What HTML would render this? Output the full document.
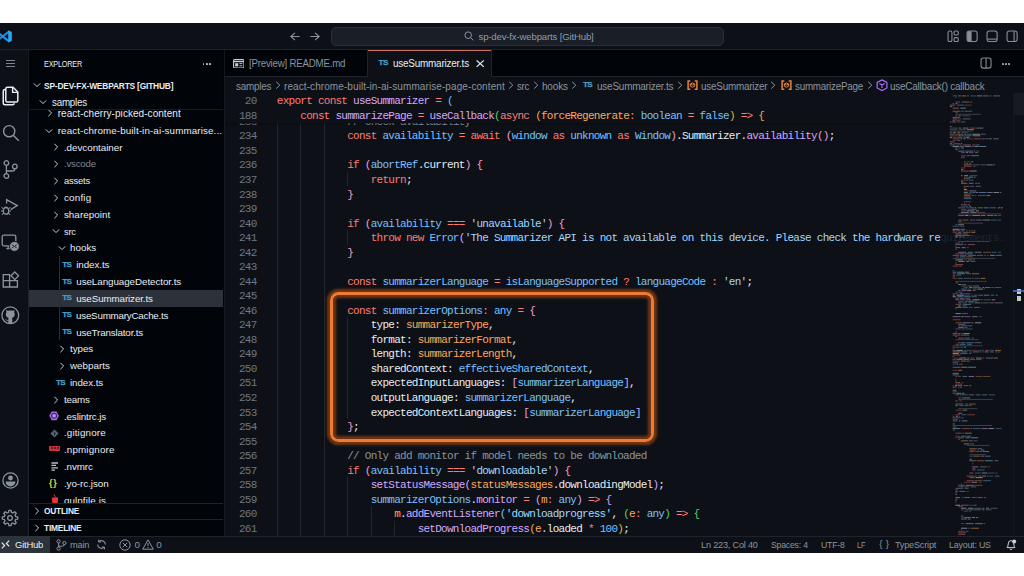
<!DOCTYPE html>
<html><head><meta charset="utf-8"><title>VS Code</title>
<style>
*{box-sizing:border-box;margin:0;padding:0}
html,body{width:1024px;height:576px;overflow:hidden;background:#fff}
body{position:relative;font-family:"Liberation Sans",sans-serif;font-size:10px;color:#e6edf3}
.win{position:absolute;left:0;top:23px;width:1024px;height:530px;background:#0d1117;overflow:hidden}
.page{position:absolute;left:0;top:-23px;width:1024px;height:576px}
.page div,.page svg{position:absolute}
.page span{position:static}
.t{white-space:pre}
.ln{left:224px;width:32.6px;text-align:right;height:14.533px;line-height:14.533px;font-family:"Liberation Mono",monospace;font-size:11.00px;letter-spacing:-0.731px;color:#6e7681;white-space:pre}
.cl{height:14.533px;line-height:14.533px;font-family:"Liberation Mono",monospace;font-size:11.00px;letter-spacing:-0.731px;white-space:pre;color:#e6edf3}
.tsi{font:bold 8.1px "Liberation Sans",sans-serif;color:#4b9fc6;height:14px;line-height:14px;letter-spacing:-0.55px;white-space:pre;-webkit-text-stroke:0.25px #4b9fc6}
</style></head><body>
<div class="win"><div class="page">
<div style="left:224.00px;top:76.00px;width:800.00px;height:460.00px;background:#0d1117;"></div><div style="left:276.80px;top:123.00px;width:1.00px;height:413.00px;background:#21262d;"></div><div style="left:300.27px;top:123.00px;width:1.00px;height:413.00px;background:#21262d;"></div><div style="left:323.75px;top:123.00px;width:1.00px;height:413.00px;background:#21262d;"></div><div style="left:347.22px;top:171.98px;width:1.00px;height:14.53px;background:#21262d;"></div><div style="left:347.22px;top:230.11px;width:1.00px;height:14.53px;background:#21262d;"></div><div style="left:347.22px;top:317.31px;width:1.00px;height:101.73px;background:#21262d;"></div><div style="left:347.22px;top:477.18px;width:1.00px;height:58.82px;background:#21262d;"></div><div style="left:370.70px;top:506.24px;width:1.00px;height:29.76px;background:#21262d;"></div><div style="left:394.17px;top:520.77px;width:1.00px;height:15.23px;background:#21262d;"></div><div class="ln" style="top:114.85px">233</div><div class="cl" style="top:114.85px;left:347.22px"><span style="color:#8b949e">// Check availability</span></div><div class="ln" style="top:129.38px">234</div><div class="cl" style="top:129.38px;left:347.22px"><span style="color:#ff7b72">const </span><span style="color:#79c0ff">availability</span><span style="color:#ff7b72"> = await </span><span style="color:#ff9bce">(</span><span style="color:#79c0ff">window</span><span style="color:#ff7b72"> as </span><span style="color:#79c0ff">unknown</span><span style="color:#ff7b72"> as </span><span style="color:#79c0ff">Window</span><span style="color:#ff9bce">)</span><span style="color:#e6edf3">.Summarizer.</span><span style="color:#d2a8ff">availability</span><span style="color:#ff9bce">()</span><span style="color:#e6edf3">;</span></div><div class="ln" style="top:143.92px">235</div><div class="ln" style="top:158.45px">236</div><div class="cl" style="top:158.45px;left:347.22px"><span style="color:#ff7b72">if </span><span style="color:#ff9bce">(</span><span style="color:#79c0ff">abortRef</span><span style="color:#e6edf3">.current</span><span style="color:#ff9bce">)</span><span style="color:#e6edf3"> </span><span style="color:#ff9bce">{</span></div><div class="ln" style="top:172.98px">237</div><div class="cl" style="top:172.98px;left:370.70px"><span style="color:#ff7b72">return</span><span style="color:#e6edf3">;</span></div><div class="ln" style="top:187.52px">238</div><div class="cl" style="top:187.52px;left:347.22px"><span style="color:#ff9bce">}</span></div><div class="ln" style="top:202.05px">239</div><div class="ln" style="top:216.58px">240</div><div class="cl" style="top:216.58px;left:347.22px"><span style="color:#ff7b72">if </span><span style="color:#ff9bce">(</span><span style="color:#79c0ff">availability</span><span style="color:#ff7b72"> === </span><span style="color:#a5d6ff">&#x27;unavailable&#x27;</span><span style="color:#ff9bce">)</span><span style="color:#e6edf3"> </span><span style="color:#ff9bce">{</span></div><div class="ln" style="top:231.11px">241</div><div class="cl" style="top:231.11px;left:370.70px"><span style="color:#ff7b72">throw new </span><span style="color:#79c0ff">Error</span><span style="color:#d2a8ff">(</span><span style="color:#a5d6ff">&#x27;The Summarizer API is not available on this device. Please check the hardware re</span><span style="color:rgba(165,214,255,.11)">quirements.</span></div><div class="ln" style="top:245.65px">242</div><div class="cl" style="top:245.65px;left:347.22px"><span style="color:#ff9bce">}</span></div><div class="ln" style="top:260.18px">243</div><div class="ln" style="top:274.71px">244</div><div class="cl" style="top:274.71px;left:347.22px"><span style="color:#ff7b72">const </span><span style="color:#79c0ff">summarizerLanguage</span><span style="color:#ff7b72"> = </span><span style="color:#79c0ff">isLanguageSupported</span><span style="color:#ff7b72"> ? </span><span style="color:#79c0ff">languageCode</span><span style="color:#ff7b72"> : </span><span style="color:#a5d6ff">&#x27;en&#x27;</span><span style="color:#e6edf3">;</span></div><div class="ln" style="top:289.25px">245</div><div class="ln" style="top:303.78px">246</div><div class="cl" style="top:303.78px;left:347.22px"><span style="color:#ff7b72">const </span><span style="color:#79c0ff">summarizerOptions</span><span style="color:#ff7b72">: </span><span style="color:#79c0ff">any</span><span style="color:#ff7b72"> = </span><span style="color:#ff9bce">{</span></div><div class="ln" style="top:318.31px">247</div><div class="cl" style="top:318.31px;left:370.70px"><span style="color:#e6edf3">type</span><span style="color:#e6edf3">: </span><span style="color:#ffa657">summarizerType</span><span style="color:#e6edf3">,</span></div><div class="ln" style="top:332.85px">248</div><div class="cl" style="top:332.85px;left:370.70px"><span style="color:#e6edf3">format</span><span style="color:#e6edf3">: </span><span style="color:#ffa657">summarizerFormat</span><span style="color:#e6edf3">,</span></div><div class="ln" style="top:347.38px">249</div><div class="cl" style="top:347.38px;left:370.70px"><span style="color:#e6edf3">length</span><span style="color:#e6edf3">: </span><span style="color:#ffa657">summarizerLength</span><span style="color:#e6edf3">,</span></div><div class="ln" style="top:361.91px">250</div><div class="cl" style="top:361.91px;left:370.70px"><span style="color:#e6edf3">sharedContext</span><span style="color:#e6edf3">: </span><span style="color:#79c0ff">effectiveSharedContext</span><span style="color:#e6edf3">,</span></div><div class="ln" style="top:376.44px">251</div><div class="cl" style="top:376.44px;left:370.70px"><span style="color:#e6edf3">expectedInputLanguages</span><span style="color:#e6edf3">: </span><span style="color:#d2a8ff">[</span><span style="color:#79c0ff">summarizerLanguage</span><span style="color:#d2a8ff">]</span><span style="color:#e6edf3">,</span></div><div class="ln" style="top:390.98px">252</div><div class="cl" style="top:390.98px;left:370.70px"><span style="color:#e6edf3">outputLanguage</span><span style="color:#e6edf3">: </span><span style="color:#79c0ff">summarizerLanguage</span><span style="color:#e6edf3">,</span></div><div class="ln" style="top:405.51px">253</div><div class="cl" style="top:405.51px;left:370.70px"><span style="color:#e6edf3">expectedContextLanguages</span><span style="color:#e6edf3">: </span><span style="color:#d2a8ff">[</span><span style="color:#79c0ff">summarizerLanguage</span><span style="color:#d2a8ff">]</span></div><div class="ln" style="top:420.04px">254</div><div class="cl" style="top:420.04px;left:347.22px"><span style="color:#ff9bce">}</span><span style="color:#e6edf3">;</span></div><div class="ln" style="top:434.58px">255</div><div class="ln" style="top:449.11px">256</div><div class="cl" style="top:449.11px;left:347.22px"><span style="color:#8b949e">// Only add monitor if model needs to be downloaded</span></div><div class="ln" style="top:463.64px">257</div><div class="cl" style="top:463.64px;left:347.22px"><span style="color:#ff7b72">if </span><span style="color:#ff9bce">(</span><span style="color:#79c0ff">availability</span><span style="color:#ff7b72"> === </span><span style="color:#a5d6ff">&#x27;downloadable&#x27;</span><span style="color:#ff9bce">)</span><span style="color:#e6edf3"> </span><span style="color:#ff9bce">{</span></div><div class="ln" style="top:478.18px">258</div><div class="cl" style="top:478.18px;left:370.70px"><span style="color:#d2a8ff">setStatusMessage</span><span style="color:#d2a8ff">(</span><span style="color:#ffa657">statusMessages</span><span style="color:#e6edf3">.downloadingModel</span><span style="color:#d2a8ff">)</span><span style="color:#e6edf3">;</span></div><div class="ln" style="top:492.71px">259</div><div class="cl" style="top:492.71px;left:370.70px"><span style="color:#79c0ff">summarizerOptions</span><span style="color:#e6edf3">.</span><span style="color:#d2a8ff">monitor</span><span style="color:#ff7b72"> = </span><span style="color:#d2a8ff">(</span><span style="color:#ffa657">m</span><span style="color:#ff7b72">: </span><span style="color:#79c0ff">any</span><span style="color:#d2a8ff">)</span><span style="color:#ff7b72"> =&gt; </span><span style="color:#d2a8ff">{</span></div><div class="ln" style="top:507.24px">260</div><div class="cl" style="top:507.24px;left:394.17px"><span style="color:#ffa657">m</span><span style="color:#e6edf3">.</span><span style="color:#d2a8ff">addEventListener</span><span style="color:#79c0ff">(</span><span style="color:#a5d6ff">&#x27;downloadprogress&#x27;</span><span style="color:#e6edf3">, </span><span style="color:#56d364">(</span><span style="color:#ffa657">e</span><span style="color:#ff7b72">: </span><span style="color:#79c0ff">any</span><span style="color:#56d364">)</span><span style="color:#ff7b72"> =&gt; </span><span style="color:#56d364">{</span></div><div class="ln" style="top:521.77px">261</div><div class="cl" style="top:521.77px;left:417.64px"><span style="color:#d2a8ff">setDownloadProgress</span><span style="color:#e3b341">(</span><span style="color:#ffa657">e</span><span style="color:#e6edf3">.loaded </span><span style="color:#ff7b72">* </span><span style="color:#79c0ff">100</span><span style="color:#e3b341">)</span><span style="color:#e6edf3">;</span></div><div style="left:224.50px;top:93.00px;width:722.00px;height:30.00px;background:#0d1117;box-shadow:0 1px 1.5px rgba(0,0,0,.4)"></div><div class="ln" style="top:94.23px">20</div><div class="cl" style="top:94.23px;left:276.80px"><span style="color:#ff7b72">export const </span><span style="color:#d2a8ff">useSummarizer</span><span style="color:#ff7b72"> = </span><span style="color:#79c0ff">(</span></div><div class="ln" style="top:109.43px">188</div><div class="cl" style="top:109.43px;left:300.27px"><span style="color:#ff7b72">const </span><span style="color:#d2a8ff">summarizePage</span><span style="color:#ff7b72"> = </span><span style="color:#d2a8ff">useCallback</span><span style="color:#56d364">(</span><span style="color:#ff7b72">async </span><span style="color:#e3b341">(</span><span style="color:#ffa657">forceRegenerate</span><span style="color:#ff7b72">: </span><span style="color:#79c0ff">boolean</span><span style="color:#ff7b72"> = </span><span style="color:#79c0ff">false</span><span style="color:#e3b341">)</span><span style="color:#ff7b72"> =&gt; </span><span style="color:#e3b341">{</span></div><div style="left:225.00px;top:77.00px;width:799.00px;height:16.00px;background:#0d1117;"></div><div class="t" style="left:236.30px;top:78.80px;height:16px;line-height:16px;font-size:10.00px;color:#8b949e;letter-spacing:-0.220px;transform:scaleX(0.9884);transform-origin:0 50%;">samples</div><svg style="left:274.60px;top:81.30px;" width="6" height="8.4" viewBox="0 0 6 8.4"><path d="M1.2 0.8 L4.8 4.2 L1.2 7.6" fill="none" stroke="#8b949e" stroke-width="1"/></svg><div class="t" style="left:284.00px;top:78.80px;height:16px;line-height:16px;font-size:10.00px;color:#8b949e;letter-spacing:0.086px;">react-chrome-built-in-ai-summarise-page-content</div><svg style="left:508.10px;top:81.30px;" width="6" height="8.4" viewBox="0 0 6 8.4"><path d="M1.2 0.8 L4.8 4.2 L1.2 7.6" fill="none" stroke="#8b949e" stroke-width="1"/></svg><div class="t" style="left:517.00px;top:78.80px;height:16px;line-height:16px;font-size:10.00px;color:#8b949e;letter-spacing:-0.220px;transform:scaleX(0.9542);transform-origin:0 50%;">src</div><svg style="left:533.00px;top:81.30px;" width="6" height="8.4" viewBox="0 0 6 8.4"><path d="M1.2 0.8 L4.8 4.2 L1.2 7.6" fill="none" stroke="#8b949e" stroke-width="1"/></svg><div class="t" style="left:541.90px;top:78.80px;height:16px;line-height:16px;font-size:10.00px;color:#8b949e;letter-spacing:-0.146px;">hooks</div><svg style="left:571.10px;top:81.30px;" width="6" height="8.4" viewBox="0 0 6 8.4"><path d="M1.2 0.8 L4.8 4.2 L1.2 7.6" fill="none" stroke="#8b949e" stroke-width="1"/></svg><div class="tsi" style="left:582.90px;top:78.39px">TS</div><div class="t" style="left:597.30px;top:78.80px;height:16px;line-height:16px;font-size:10.00px;color:#8b949e;letter-spacing:-0.220px;transform:scaleX(0.9958);transform-origin:0 50%;">useSummarizer.ts</div><svg style="left:677.20px;top:81.30px;" width="6" height="8.4" viewBox="0 0 6 8.4"><path d="M1.2 0.8 L4.8 4.2 L1.2 7.6" fill="none" stroke="#8b949e" stroke-width="1"/></svg><svg style="left:687.20px;top:79.80px;" width="11" height="10.2" viewBox="0 0 11 10.2"><path d="M3.3 0.9 H1.1 V9.3 H3.3 M7.7 0.9 H9.9 V9.3 H7.7" fill="none" stroke="#e8833a" stroke-width="1.5"/><path d="M3.3 4 L5.5 3 L7.7 4 V6.2 L5.5 7.2 L3.3 6.2 Z M3.3 4.1 L5.5 5.1 L7.7 4.1" fill="none" stroke="#e8833a" stroke-width="1"/></svg><div class="t" style="left:700.70px;top:78.80px;height:16px;line-height:16px;font-size:10.00px;color:#8b949e;letter-spacing:-0.220px;transform:scaleX(0.9869);transform-origin:0 50%;">useSummarizer</div><svg style="left:770.40px;top:81.30px;" width="6" height="8.4" viewBox="0 0 6 8.4"><path d="M1.2 0.8 L4.8 4.2 L1.2 7.6" fill="none" stroke="#8b949e" stroke-width="1"/></svg><svg style="left:780.90px;top:79.80px;" width="11" height="10.2" viewBox="0 0 11 10.2"><path d="M3.3 0.9 H1.1 V9.3 H3.3 M7.7 0.9 H9.9 V9.3 H7.7" fill="none" stroke="#e8833a" stroke-width="1.5"/><path d="M3.3 4 L5.5 3 L7.7 4 V6.2 L5.5 7.2 L3.3 6.2 Z M3.3 4.1 L5.5 5.1 L7.7 4.1" fill="none" stroke="#e8833a" stroke-width="1"/></svg><div class="t" style="left:794.80px;top:78.80px;height:16px;line-height:16px;font-size:10.00px;color:#8b949e;letter-spacing:-0.220px;transform:scaleX(0.9797);transform-origin:0 50%;">summarizePage</div><svg style="left:866.60px;top:81.30px;" width="6" height="8.4" viewBox="0 0 6 8.4"><path d="M1.2 0.8 L4.8 4.2 L1.2 7.6" fill="none" stroke="#8b949e" stroke-width="1"/></svg><svg style="left:875.70px;top:79.20px;" width="12" height="12.4" viewBox="0 0 12 12.4"><path d="M6 0.9 L10.9 3.4 V9 L6 11.5 L1.1 9 V3.4 Z" fill="none" stroke="#a371f7" stroke-width="1.2"/><path d="M3.4 4.5 L6 6 L8.6 4.5 M6 6 V9" fill="none" stroke="#a371f7" stroke-width="1.2"/></svg><div class="t" style="left:890.40px;top:78.80px;height:16px;line-height:16px;font-size:10.00px;color:#8b949e;letter-spacing:-0.220px;transform:scaleX(0.9914);transform-origin:0 50%;">useCallback() callback</div><div style="left:329.8px;top:292px;width:324.2px;height:149.7px;border:3.4px solid #f07a33;border-radius:8.5px;box-shadow:0 0 2.5px 3px rgba(175,78,18,.62), inset 0 0 2.5px 3px rgba(175,78,18,.62)"></div><svg style="left:0;top:0" width="1024" height="576"><rect x="952.62" y="95.40" width="4.68" height="1" fill="#79c0ff" opacity="0.39"/><rect x="958.08" y="95.40" width="3.12" height="1" fill="#e6edf3" opacity="0.37"/><rect x="961.98" y="95.40" width="3.90" height="1" fill="#ffa657" opacity="0.53"/><rect x="966.66" y="95.40" width="2.34" height="1" fill="#ffa657" opacity="0.41"/><rect x="970.56" y="95.40" width="5.46" height="1" fill="#79c0ff" opacity="0.35"/><rect x="976.80" y="95.40" width="5.46" height="1" fill="#e6edf3" opacity="0.46"/><rect x="983.04" y="95.40" width="5.46" height="1" fill="#d2a8ff" opacity="0.47"/><rect x="989.28" y="95.40" width="2.34" height="1" fill="#ffa657" opacity="0.34"/><rect x="993.18" y="95.40" width="7.02" height="1" fill="#e6edf3" opacity="0.35"/><rect x="955.42" y="96.93" width="0.90" height="1" fill="#ff9bce" opacity="0.4"/><rect x="955.42" y="101.53" width="4.68" height="1" fill="#d2a8ff" opacity="0.38"/><rect x="961.66" y="101.53" width="7.80" height="1" fill="#e6edf3" opacity="0.36"/><rect x="970.24" y="101.53" width="2.34" height="1" fill="#ffa657" opacity="0.36"/><rect x="952.62" y="103.07" width="1.56" height="1" fill="#ff7b72" opacity="0.46"/><rect x="955.74" y="103.07" width="1.56" height="1" fill="#e6edf3" opacity="0.50"/><rect x="949.81" y="104.60" width="5.46" height="1" fill="#ff7b72" opacity="0.54"/><rect x="956.83" y="104.60" width="7.02" height="1" fill="#e6edf3" opacity="0.31"/><rect x="964.63" y="104.60" width="7.02" height="1" fill="#ff7b72" opacity="0.35"/><rect x="949.81" y="106.13" width="2.40" height="1" fill="#e6edf3" opacity="0.4"/><rect x="952.62" y="107.66" width="6.24" height="1" fill="#ff7b72" opacity="0.53"/><rect x="960.42" y="107.66" width="5.46" height="1" fill="#a5d6ff" opacity="0.50"/><rect x="952.62" y="110.73" width="7.80" height="1" fill="#d2a8ff" opacity="0.44"/><rect x="961.20" y="110.73" width="2.34" height="1" fill="#79c0ff" opacity="0.46"/><rect x="964.32" y="110.73" width="7.80" height="1" fill="#a5d6ff" opacity="0.36"/><rect x="955.42" y="112.26" width="2.40" height="1" fill="#e3b341" opacity="0.4"/><rect x="955.42" y="113.80" width="25.32" height="1" fill="#8b949e" opacity="0.35"/><rect x="955.42" y="115.33" width="1.56" height="1" fill="#ff7b72" opacity="0.46"/><rect x="958.54" y="115.33" width="2.34" height="1" fill="#a5d6ff" opacity="0.47"/><rect x="962.44" y="115.33" width="7.80" height="1" fill="#ff7b72" opacity="0.34"/><rect x="952.62" y="116.86" width="7.02" height="1" fill="#79c0ff" opacity="0.49"/><rect x="952.62" y="118.40" width="4.68" height="1" fill="#ff7b72" opacity="0.54"/><rect x="958.08" y="118.40" width="3.12" height="1" fill="#a5d6ff" opacity="0.31"/><rect x="962.76" y="118.40" width="7.80" height="1" fill="#d2a8ff" opacity="0.43"/><rect x="952.62" y="119.93" width="2.34" height="1" fill="#d2a8ff" opacity="0.42"/><rect x="955.74" y="119.93" width="4.68" height="1" fill="#ffa657" opacity="0.30"/><rect x="949.81" y="121.46" width="1.56" height="1" fill="#79c0ff" opacity="0.50"/><rect x="952.15" y="121.46" width="3.90" height="1" fill="#a5d6ff" opacity="0.44"/><rect x="956.83" y="121.46" width="3.12" height="1" fill="#ff7b72" opacity="0.40"/><rect x="960.73" y="121.46" width="4.68" height="1" fill="#79c0ff" opacity="0.46"/><rect x="949.81" y="126.06" width="2.40" height="1" fill="#ff9bce" opacity="0.4"/><rect x="949.81" y="127.59" width="1.56" height="1" fill="#ffa657" opacity="0.31"/><rect x="952.15" y="127.59" width="5.46" height="1" fill="#79c0ff" opacity="0.33"/><rect x="958.39" y="127.59" width="3.12" height="1" fill="#e6edf3" opacity="0.35"/><rect x="963.07" y="127.59" width="5.46" height="1" fill="#e6edf3" opacity="0.43"/><rect x="970.09" y="127.59" width="5.46" height="1" fill="#ff7b72" opacity="0.46"/><rect x="976.33" y="127.59" width="7.02" height="1" fill="#e6edf3" opacity="0.39"/><rect x="949.81" y="129.13" width="7.80" height="1" fill="#ff7b72" opacity="0.35"/><rect x="959.17" y="129.13" width="6.24" height="1" fill="#79c0ff" opacity="0.31"/><rect x="966.97" y="129.13" width="7.02" height="1" fill="#e6edf3" opacity="0.45"/><rect x="949.81" y="130.66" width="22.89" height="1" fill="#8b949e" opacity="0.35"/><rect x="949.81" y="132.19" width="1.56" height="1" fill="#d2a8ff" opacity="0.52"/><rect x="952.93" y="132.19" width="3.12" height="1" fill="#ffa657" opacity="0.55"/><rect x="957.61" y="132.19" width="2.34" height="1" fill="#ffa657" opacity="0.51"/><rect x="961.51" y="132.19" width="6.24" height="1" fill="#d2a8ff" opacity="0.31"/><rect x="949.81" y="133.72" width="4.68" height="1" fill="#e6edf3" opacity="0.34"/><rect x="955.27" y="133.72" width="7.80" height="1" fill="#ffa657" opacity="0.44"/><rect x="963.85" y="133.72" width="2.34" height="1" fill="#a5d6ff" opacity="0.42"/><rect x="966.97" y="133.72" width="4.68" height="1" fill="#79c0ff" opacity="0.46"/><rect x="972.43" y="133.72" width="7.80" height="1" fill="#e6edf3" opacity="0.51"/><rect x="981.01" y="133.72" width="4.68" height="1" fill="#d2a8ff" opacity="0.41"/><rect x="949.81" y="135.26" width="7.80" height="1" fill="#ff7b72" opacity="0.32"/><rect x="958.39" y="135.26" width="2.34" height="1" fill="#d2a8ff" opacity="0.54"/><rect x="961.51" y="135.26" width="2.34" height="1" fill="#79c0ff" opacity="0.54"/><rect x="964.63" y="135.26" width="7.02" height="1" fill="#79c0ff" opacity="0.43"/><rect x="972.43" y="135.26" width="7.80" height="1" fill="#a5d6ff" opacity="0.55"/><rect x="949.81" y="136.79" width="2.34" height="1" fill="#e6edf3" opacity="0.51"/><rect x="952.93" y="136.79" width="3.90" height="1" fill="#ffa657" opacity="0.32"/><rect x="957.61" y="136.79" width="4.68" height="1" fill="#79c0ff" opacity="0.45"/><rect x="963.85" y="136.79" width="1.56" height="1" fill="#a5d6ff" opacity="0.50"/><rect x="966.19" y="136.79" width="3.12" height="1" fill="#e6edf3" opacity="0.50"/><rect x="952.62" y="138.32" width="7.02" height="1" fill="#ff7b72" opacity="0.41"/><rect x="960.42" y="138.32" width="1.56" height="1" fill="#e6edf3" opacity="0.35"/><rect x="962.76" y="138.32" width="3.12" height="1" fill="#e6edf3" opacity="0.33"/><rect x="966.66" y="138.32" width="6.24" height="1" fill="#ff7b72" opacity="0.35"/><rect x="973.68" y="138.32" width="7.80" height="1" fill="#ff7b72" opacity="0.46"/><rect x="982.26" y="138.32" width="2.34" height="1" fill="#d2a8ff" opacity="0.46"/><rect x="985.38" y="138.32" width="3.12" height="1" fill="#79c0ff" opacity="0.43"/><rect x="989.28" y="138.32" width="2.34" height="1" fill="#e6edf3" opacity="0.47"/><rect x="993.18" y="138.32" width="5.46" height="1" fill="#79c0ff" opacity="0.48"/><rect x="952.62" y="139.86" width="3.90" height="1" fill="#ff7b72" opacity="0.31"/><rect x="957.30" y="139.86" width="3.12" height="1" fill="#e6edf3" opacity="0.32"/><rect x="949.81" y="141.39" width="4.68" height="1" fill="#ff7b72" opacity="0.48"/><rect x="949.81" y="142.92" width="2.34" height="1" fill="#79c0ff" opacity="0.43"/><rect x="953.71" y="142.92" width="6.24" height="1" fill="#79c0ff" opacity="0.34"/><rect x="960.73" y="142.92" width="1.56" height="1" fill="#79c0ff" opacity="0.51"/><rect x="949.81" y="144.46" width="5.46" height="1" fill="#79c0ff" opacity="0.46"/><rect x="956.05" y="144.46" width="6.24" height="1" fill="#d2a8ff" opacity="0.33"/><rect x="963.07" y="144.46" width="7.80" height="1" fill="#ff7b72" opacity="0.54"/><rect x="972.43" y="144.46" width="3.12" height="1" fill="#d2a8ff" opacity="0.40"/><rect x="976.33" y="144.46" width="3.12" height="1" fill="#79c0ff" opacity="0.52"/><rect x="952.62" y="145.99" width="6.24" height="1" fill="#e6edf3" opacity="0.49"/><rect x="959.64" y="145.99" width="4.68" height="1" fill="#e6edf3" opacity="0.33"/><rect x="965.10" y="145.99" width="5.46" height="1" fill="#a5d6ff" opacity="0.52"/><rect x="971.34" y="145.99" width="2.34" height="1" fill="#ff7b72" opacity="0.47"/><rect x="974.46" y="145.99" width="3.90" height="1" fill="#e6edf3" opacity="0.47"/><rect x="979.14" y="145.99" width="7.02" height="1" fill="#a5d6ff" opacity="0.49"/><rect x="955.42" y="147.52" width="1.56" height="1" fill="#e6edf3" opacity="0.39"/><rect x="957.76" y="147.52" width="2.34" height="1" fill="#79c0ff" opacity="0.32"/><rect x="960.88" y="147.52" width="3.12" height="1" fill="#79c0ff" opacity="0.52"/><rect x="955.42" y="149.05" width="2.40" height="1" fill="#e3b341" opacity="0.4"/><rect x="958.23" y="150.59" width="6.24" height="1" fill="#d2a8ff" opacity="0.49"/><rect x="965.25" y="150.59" width="7.80" height="1" fill="#79c0ff" opacity="0.49"/><rect x="973.83" y="150.59" width="1.56" height="1" fill="#ffa657" opacity="0.44"/><rect x="976.17" y="150.59" width="3.12" height="1" fill="#ffa657" opacity="0.30"/><rect x="961.04" y="152.12" width="3.90" height="1" fill="#e6edf3" opacity="0.31"/><rect x="965.72" y="152.12" width="2.34" height="1" fill="#d2a8ff" opacity="0.55"/><rect x="968.84" y="152.12" width="4.68" height="1" fill="#d2a8ff" opacity="0.42"/><rect x="975.08" y="152.12" width="3.12" height="1" fill="#a5d6ff" opacity="0.41"/><rect x="961.04" y="155.19" width="4.68" height="1" fill="#ff7b72" opacity="0.37"/><rect x="966.50" y="155.19" width="3.90" height="1" fill="#e6edf3" opacity="0.30"/><rect x="971.18" y="155.19" width="7.80" height="1" fill="#e6edf3" opacity="0.40"/><rect x="961.04" y="156.72" width="3.90" height="1" fill="#ff7b72" opacity="0.48"/><rect x="963.85" y="161.32" width="2.34" height="1" fill="#ffa657" opacity="0.36"/><rect x="966.97" y="161.32" width="3.12" height="1" fill="#79c0ff" opacity="0.32"/><rect x="970.87" y="161.32" width="2.34" height="1" fill="#79c0ff" opacity="0.55"/><rect x="963.85" y="162.85" width="1.56" height="1" fill="#ffa657" opacity="0.31"/><rect x="966.19" y="162.85" width="1.56" height="1" fill="#a5d6ff" opacity="0.43"/><rect x="969.31" y="162.85" width="1.56" height="1" fill="#a5d6ff" opacity="0.36"/><rect x="963.85" y="164.38" width="7.80" height="1" fill="#ffa657" opacity="0.53"/><rect x="972.43" y="164.38" width="7.02" height="1" fill="#a5d6ff" opacity="0.32"/><rect x="980.23" y="164.38" width="5.46" height="1" fill="#d2a8ff" opacity="0.37"/><rect x="986.47" y="164.38" width="6.24" height="1" fill="#e6edf3" opacity="0.46"/><rect x="993.49" y="164.38" width="1.56" height="1" fill="#79c0ff" opacity="0.52"/><rect x="963.85" y="165.92" width="7.80" height="1" fill="#ff7b72" opacity="0.36"/><rect x="973.21" y="165.92" width="2.34" height="1" fill="#ff7b72" opacity="0.32"/><rect x="961.04" y="167.45" width="3.90" height="1" fill="#ff7b72" opacity="0.39"/><rect x="961.04" y="168.98" width="2.40" height="1" fill="#e6edf3" opacity="0.4"/><rect x="961.04" y="170.52" width="7.80" height="1" fill="#ff7b72" opacity="0.50"/><rect x="969.62" y="170.52" width="7.02" height="1" fill="#e6edf3" opacity="0.50"/><rect x="961.04" y="175.12" width="1.56" height="1" fill="#d2a8ff" opacity="0.52"/><rect x="964.16" y="175.12" width="3.90" height="1" fill="#e6edf3" opacity="0.50"/><rect x="969.62" y="175.12" width="7.80" height="1" fill="#ffa657" opacity="0.32"/><rect x="963.85" y="176.65" width="3.90" height="1" fill="#ffa657" opacity="0.38"/><rect x="968.53" y="176.65" width="4.68" height="1" fill="#a5d6ff" opacity="0.52"/><rect x="973.99" y="176.65" width="1.56" height="1" fill="#a5d6ff" opacity="0.44"/><rect x="963.85" y="178.18" width="1.56" height="1" fill="#ffa657" opacity="0.54"/><rect x="966.19" y="178.18" width="3.90" height="1" fill="#79c0ff" opacity="0.44"/><rect x="961.04" y="179.71" width="2.34" height="1" fill="#ff7b72" opacity="0.39"/><rect x="964.16" y="179.71" width="3.90" height="1" fill="#ffa657" opacity="0.34"/><rect x="968.84" y="179.71" width="4.68" height="1" fill="#79c0ff" opacity="0.38"/><rect x="961.04" y="181.25" width="2.40" height="1" fill="#e6edf3" opacity="0.4"/><rect x="961.04" y="182.78" width="6.24" height="1" fill="#d2a8ff" opacity="0.50"/><rect x="968.84" y="182.78" width="4.68" height="1" fill="#e6edf3" opacity="0.40"/><rect x="975.08" y="182.78" width="2.34" height="1" fill="#79c0ff" opacity="0.45"/><rect x="978.20" y="182.78" width="1.56" height="1" fill="#d2a8ff" opacity="0.52"/><rect x="963.85" y="185.85" width="5.46" height="1" fill="#ffa657" opacity="0.40"/><rect x="970.09" y="185.85" width="3.90" height="1" fill="#a5d6ff" opacity="0.34"/><rect x="975.55" y="185.85" width="5.46" height="1" fill="#a5d6ff" opacity="0.36"/><rect x="963.85" y="187.38" width="1.60" height="1" fill="#ff9bce" opacity="0.4"/><rect x="963.85" y="188.91" width="3.12" height="1" fill="#e6edf3" opacity="0.55"/><rect x="963.85" y="190.45" width="4.68" height="1" fill="#ff7b72" opacity="0.33"/><rect x="969.31" y="190.45" width="7.02" height="1" fill="#d2a8ff" opacity="0.51"/><rect x="963.85" y="191.98" width="3.90" height="1" fill="#e6edf3" opacity="0.42"/><rect x="969.31" y="191.98" width="2.34" height="1" fill="#79c0ff" opacity="0.36"/><rect x="972.43" y="191.98" width="2.34" height="1" fill="#a5d6ff" opacity="0.44"/><rect x="975.55" y="191.98" width="2.34" height="1" fill="#d2a8ff" opacity="0.54"/><rect x="978.67" y="191.98" width="7.80" height="1" fill="#79c0ff" opacity="0.53"/><rect x="987.25" y="191.98" width="5.46" height="1" fill="#e6edf3" opacity="0.42"/><rect x="993.49" y="191.98" width="5.46" height="1" fill="#e6edf3" opacity="0.50"/><rect x="999.73" y="191.98" width="1.56" height="1" fill="#e6edf3" opacity="0.38"/><rect x="963.85" y="193.51" width="7.80" height="1" fill="#ffa657" opacity="0.43"/><rect x="963.85" y="195.04" width="6.24" height="1" fill="#ffa657" opacity="0.41"/><rect x="971.65" y="195.04" width="2.34" height="1" fill="#a5d6ff" opacity="0.36"/><rect x="974.77" y="195.04" width="1.56" height="1" fill="#ff7b72" opacity="0.39"/><rect x="977.89" y="195.04" width="7.80" height="1" fill="#ffa657" opacity="0.35"/><rect x="986.47" y="195.04" width="3.90" height="1" fill="#e6edf3" opacity="0.41"/><rect x="963.85" y="196.58" width="7.02" height="1" fill="#ff7b72" opacity="0.52"/><rect x="963.85" y="198.11" width="7.80" height="1" fill="#79c0ff" opacity="0.41"/><rect x="963.85" y="201.18" width="7.02" height="1" fill="#ff7b72" opacity="0.35"/><rect x="963.85" y="202.71" width="0.90" height="1" fill="#e3b341" opacity="0.4"/><rect x="961.04" y="204.24" width="1.56" height="1" fill="#e6edf3" opacity="0.42"/><rect x="963.38" y="204.24" width="3.90" height="1" fill="#ff7b72" opacity="0.50"/><rect x="968.06" y="204.24" width="1.56" height="1" fill="#79c0ff" opacity="0.54"/><rect x="961.04" y="205.78" width="7.02" height="1" fill="#79c0ff" opacity="0.31"/><rect x="968.84" y="205.78" width="2.34" height="1" fill="#e6edf3" opacity="0.38"/><rect x="958.23" y="207.31" width="3.12" height="1" fill="#79c0ff" opacity="0.45"/><rect x="962.13" y="207.31" width="3.12" height="1" fill="#a5d6ff" opacity="0.36"/><rect x="966.03" y="207.31" width="3.12" height="1" fill="#a5d6ff" opacity="0.32"/><rect x="969.93" y="207.31" width="3.90" height="1" fill="#a5d6ff" opacity="0.43"/><rect x="974.61" y="207.31" width="1.56" height="1" fill="#a5d6ff" opacity="0.54"/><rect x="977.73" y="207.31" width="5.46" height="1" fill="#e6edf3" opacity="0.37"/><rect x="983.97" y="207.31" width="4.68" height="1" fill="#79c0ff" opacity="0.52"/><rect x="989.43" y="207.31" width="7.02" height="1" fill="#e6edf3" opacity="0.31"/><rect x="998.01" y="207.31" width="2.34" height="1" fill="#e6edf3" opacity="0.47"/><rect x="1001.13" y="207.31" width="1.56" height="1" fill="#e6edf3" opacity="0.53"/><rect x="961.04" y="208.84" width="5.46" height="1" fill="#ff7b72" opacity="0.39"/><rect x="968.06" y="208.84" width="2.34" height="1" fill="#79c0ff" opacity="0.37"/><rect x="971.18" y="208.84" width="5.46" height="1" fill="#d2a8ff" opacity="0.39"/><rect x="961.04" y="210.37" width="4.68" height="1" fill="#ff7b72" opacity="0.37"/><rect x="966.50" y="210.37" width="7.80" height="1" fill="#e6edf3" opacity="0.47"/><rect x="975.86" y="210.37" width="3.12" height="1" fill="#e6edf3" opacity="0.50"/><rect x="961.04" y="211.91" width="7.80" height="1" fill="#d2a8ff" opacity="0.55"/><rect x="970.40" y="211.91" width="6.24" height="1" fill="#e6edf3" opacity="0.43"/><rect x="977.42" y="211.91" width="7.80" height="1" fill="#ff7b72" opacity="0.35"/><rect x="958.23" y="213.44" width="42.95" height="1" fill="#8b949e" opacity="0.35"/><rect x="958.23" y="214.97" width="6.24" height="1" fill="#e6edf3" opacity="0.34"/><rect x="965.25" y="214.97" width="3.12" height="1" fill="#e6edf3" opacity="0.52"/><rect x="969.15" y="214.97" width="2.34" height="1" fill="#ffa657" opacity="0.30"/><rect x="972.27" y="214.97" width="7.80" height="1" fill="#e6edf3" opacity="0.45"/><rect x="980.85" y="214.97" width="4.68" height="1" fill="#79c0ff" opacity="0.54"/><rect x="987.09" y="214.97" width="6.24" height="1" fill="#79c0ff" opacity="0.54"/><rect x="994.11" y="214.97" width="3.12" height="1" fill="#79c0ff" opacity="0.46"/><rect x="998.01" y="214.97" width="3.12" height="1" fill="#ff7b72" opacity="0.38"/><rect x="958.23" y="219.57" width="3.90" height="1" fill="#ff7b72" opacity="0.50"/><rect x="962.91" y="219.57" width="5.46" height="1" fill="#ffa657" opacity="0.48"/><rect x="969.93" y="219.57" width="5.46" height="1" fill="#d2a8ff" opacity="0.38"/><rect x="976.17" y="219.57" width="5.46" height="1" fill="#d2a8ff" opacity="0.48"/><rect x="982.41" y="219.57" width="7.80" height="1" fill="#e6edf3" opacity="0.43"/><rect x="990.99" y="219.57" width="5.46" height="1" fill="#79c0ff" opacity="0.41"/><rect x="997.23" y="219.57" width="3.90" height="1" fill="#79c0ff" opacity="0.34"/><rect x="958.23" y="221.11" width="3.12" height="1" fill="#ff7b72" opacity="0.38"/><rect x="958.23" y="222.64" width="24.82" height="1" fill="#8b949e" opacity="0.35"/><rect x="955.42" y="224.17" width="1.56" height="1" fill="#d2a8ff" opacity="0.34"/><rect x="957.76" y="224.17" width="6.24" height="1" fill="#e6edf3" opacity="0.42"/><rect x="952.62" y="225.70" width="6.24" height="1" fill="#79c0ff" opacity="0.36"/><rect x="959.64" y="225.70" width="4.68" height="1" fill="#d2a8ff" opacity="0.32"/><rect x="952.62" y="228.77" width="7.02" height="1" fill="#e6edf3" opacity="0.54"/><rect x="960.42" y="228.77" width="4.68" height="1" fill="#a5d6ff" opacity="0.45"/><rect x="952.62" y="230.30" width="2.34" height="1" fill="#d2a8ff" opacity="0.51"/><rect x="955.74" y="230.30" width="4.68" height="1" fill="#ff7b72" opacity="0.45"/><rect x="961.20" y="230.30" width="3.12" height="1" fill="#e6edf3" opacity="0.35"/><rect x="965.88" y="230.30" width="2.34" height="1" fill="#79c0ff" opacity="0.30"/><rect x="969.00" y="230.30" width="3.90" height="1" fill="#ff7b72" opacity="0.31"/><rect x="973.68" y="230.30" width="1.56" height="1" fill="#a5d6ff" opacity="0.49"/><rect x="952.62" y="231.84" width="4.68" height="1" fill="#ff7b72" opacity="0.35"/><rect x="958.08" y="231.84" width="3.12" height="1" fill="#a5d6ff" opacity="0.43"/><rect x="962.76" y="231.84" width="7.80" height="1" fill="#ffa657" opacity="0.41"/><rect x="971.34" y="231.84" width="3.90" height="1" fill="#ffa657" opacity="0.54"/><rect x="955.42" y="233.37" width="6.24" height="1" fill="#d2a8ff" opacity="0.46"/><rect x="962.44" y="233.37" width="5.46" height="1" fill="#ff7b72" opacity="0.45"/><rect x="955.42" y="234.90" width="6.24" height="1" fill="#ff7b72" opacity="0.54"/><rect x="962.44" y="234.90" width="7.02" height="1" fill="#79c0ff" opacity="0.47"/><rect x="970.24" y="234.90" width="1.56" height="1" fill="#79c0ff" opacity="0.30"/><rect x="955.42" y="236.44" width="2.34" height="1" fill="#e6edf3" opacity="0.55"/><rect x="959.32" y="236.44" width="1.56" height="1" fill="#79c0ff" opacity="0.55"/><rect x="961.66" y="236.44" width="2.34" height="1" fill="#e6edf3" opacity="0.33"/><rect x="958.23" y="241.03" width="31.46" height="1" fill="#8b949e" opacity="0.35"/><rect x="955.42" y="242.57" width="4.68" height="1" fill="#ff7b72" opacity="0.44"/><rect x="960.88" y="242.57" width="2.34" height="1" fill="#79c0ff" opacity="0.33"/><rect x="955.42" y="244.10" width="7.80" height="1" fill="#d2a8ff" opacity="0.41"/><rect x="964.00" y="244.10" width="2.34" height="1" fill="#d2a8ff" opacity="0.34"/><rect x="967.90" y="244.10" width="7.02" height="1" fill="#ff7b72" opacity="0.47"/><rect x="955.42" y="245.63" width="0.90" height="1" fill="#ff9bce" opacity="0.4"/><rect x="955.42" y="247.17" width="4.68" height="1" fill="#79c0ff" opacity="0.49"/><rect x="961.66" y="247.17" width="3.90" height="1" fill="#d2a8ff" opacity="0.54"/><rect x="967.12" y="247.17" width="1.56" height="1" fill="#a5d6ff" opacity="0.37"/><rect x="955.42" y="248.70" width="1.60" height="1" fill="#e3b341" opacity="0.4"/><rect x="958.23" y="251.77" width="7.80" height="1" fill="#d2a8ff" opacity="0.49"/><rect x="967.59" y="251.77" width="5.46" height="1" fill="#a5d6ff" opacity="0.41"/><rect x="974.61" y="251.77" width="7.02" height="1" fill="#a5d6ff" opacity="0.45"/><rect x="983.19" y="251.77" width="7.80" height="1" fill="#ffa657" opacity="0.40"/><rect x="991.77" y="251.77" width="4.68" height="1" fill="#79c0ff" opacity="0.42"/><rect x="998.01" y="251.77" width="3.12" height="1" fill="#79c0ff" opacity="0.34"/><rect x="955.42" y="253.30" width="3.12" height="1" fill="#ff7b72" opacity="0.45"/><rect x="959.32" y="253.30" width="4.68" height="1" fill="#ff7b72" opacity="0.54"/><rect x="964.78" y="253.30" width="7.80" height="1" fill="#a5d6ff" opacity="0.42"/><rect x="952.62" y="254.83" width="6.24" height="1" fill="#ff7b72" opacity="0.51"/><rect x="959.64" y="254.83" width="7.02" height="1" fill="#79c0ff" opacity="0.41"/><rect x="968.22" y="254.83" width="7.80" height="1" fill="#e6edf3" opacity="0.35"/><rect x="976.80" y="254.83" width="6.24" height="1" fill="#ffa657" opacity="0.44"/><rect x="983.82" y="254.83" width="2.34" height="1" fill="#79c0ff" opacity="0.31"/><rect x="986.94" y="254.83" width="1.56" height="1" fill="#a5d6ff" opacity="0.35"/><rect x="990.06" y="254.83" width="4.68" height="1" fill="#e6edf3" opacity="0.49"/><rect x="995.52" y="254.83" width="6.24" height="1" fill="#a5d6ff" opacity="0.43"/><rect x="955.42" y="256.36" width="3.90" height="1" fill="#ff7b72" opacity="0.35"/><rect x="960.10" y="256.36" width="5.46" height="1" fill="#79c0ff" opacity="0.49"/><rect x="966.34" y="256.36" width="6.24" height="1" fill="#ffa657" opacity="0.45"/><rect x="952.62" y="257.90" width="42.65" height="1" fill="#8b949e" opacity="0.35"/><rect x="955.42" y="259.43" width="7.80" height="1" fill="#e6edf3" opacity="0.51"/><rect x="964.00" y="259.43" width="3.12" height="1" fill="#ff7b72" opacity="0.31"/><rect x="967.90" y="259.43" width="4.68" height="1" fill="#e6edf3" opacity="0.37"/><rect x="973.36" y="259.43" width="1.56" height="1" fill="#e6edf3" opacity="0.38"/><rect x="958.23" y="260.96" width="6.24" height="1" fill="#d2a8ff" opacity="0.54"/><rect x="966.03" y="260.96" width="3.12" height="1" fill="#e6edf3" opacity="0.39"/><rect x="970.71" y="260.96" width="4.68" height="1" fill="#ffa657" opacity="0.36"/><rect x="955.42" y="262.50" width="1.60" height="1" fill="#e3b341" opacity="0.4"/><rect x="955.42" y="264.03" width="7.80" height="1" fill="#ff7b72" opacity="0.43"/><rect x="952.62" y="265.56" width="5.46" height="1" fill="#ff7b72" opacity="0.44"/><rect x="958.86" y="265.56" width="3.12" height="1" fill="#ffa657" opacity="0.40"/><rect x="952.62" y="270.16" width="1.56" height="1" fill="#79c0ff" opacity="0.33"/><rect x="952.62" y="271.69" width="3.90" height="1" fill="#d2a8ff" opacity="0.47"/><rect x="957.30" y="271.69" width="7.02" height="1" fill="#a5d6ff" opacity="0.49"/><rect x="965.10" y="271.69" width="3.90" height="1" fill="#e6edf3" opacity="0.45"/><rect x="952.62" y="273.23" width="3.12" height="1" fill="#79c0ff" opacity="0.37"/><rect x="957.30" y="273.23" width="7.80" height="1" fill="#a5d6ff" opacity="0.49"/><rect x="965.88" y="273.23" width="5.46" height="1" fill="#ffa657" opacity="0.43"/><rect x="972.12" y="273.23" width="7.02" height="1" fill="#ffa657" opacity="0.49"/><rect x="952.62" y="274.76" width="2.34" height="1" fill="#ff7b72" opacity="0.43"/><rect x="955.74" y="274.76" width="5.46" height="1" fill="#79c0ff" opacity="0.39"/><rect x="952.62" y="276.29" width="2.40" height="1" fill="#e3b341" opacity="0.4"/><rect x="952.62" y="277.83" width="4.68" height="1" fill="#ff7b72" opacity="0.34"/><rect x="958.08" y="277.83" width="4.68" height="1" fill="#a5d6ff" opacity="0.38"/><rect x="963.54" y="277.83" width="7.80" height="1" fill="#79c0ff" opacity="0.33"/><rect x="972.12" y="277.83" width="1.56" height="1" fill="#ffa657" opacity="0.39"/><rect x="974.46" y="277.83" width="5.46" height="1" fill="#79c0ff" opacity="0.37"/><rect x="980.70" y="277.83" width="4.68" height="1" fill="#ffa657" opacity="0.54"/><rect x="955.42" y="280.89" width="31.40" height="1" fill="#8b949e" opacity="0.35"/><rect x="955.42" y="282.43" width="2.40" height="1" fill="#e3b341" opacity="0.4"/><rect x="958.23" y="283.96" width="3.12" height="1" fill="#e6edf3" opacity="0.47"/><rect x="962.13" y="283.96" width="3.90" height="1" fill="#79c0ff" opacity="0.42"/><rect x="961.04" y="285.49" width="5.46" height="1" fill="#ffa657" opacity="0.38"/><rect x="967.28" y="285.49" width="4.68" height="1" fill="#a5d6ff" opacity="0.37"/><rect x="972.74" y="285.49" width="6.24" height="1" fill="#a5d6ff" opacity="0.43"/><rect x="963.85" y="287.02" width="3.90" height="1" fill="#79c0ff" opacity="0.33"/><rect x="969.31" y="287.02" width="3.12" height="1" fill="#a5d6ff" opacity="0.52"/><rect x="973.21" y="287.02" width="7.80" height="1" fill="#ffa657" opacity="0.37"/><rect x="982.57" y="287.02" width="1.56" height="1" fill="#e6edf3" opacity="0.46"/><rect x="984.91" y="287.02" width="5.46" height="1" fill="#e6edf3" opacity="0.39"/><rect x="991.15" y="287.02" width="3.12" height="1" fill="#79c0ff" opacity="0.34"/><rect x="995.05" y="287.02" width="6.24" height="1" fill="#d2a8ff" opacity="0.36"/><rect x="961.04" y="288.56" width="6.24" height="1" fill="#79c0ff" opacity="0.44"/><rect x="968.06" y="288.56" width="3.12" height="1" fill="#ffa657" opacity="0.33"/><rect x="972.74" y="288.56" width="3.90" height="1" fill="#a5d6ff" opacity="0.42"/><rect x="977.42" y="288.56" width="5.46" height="1" fill="#e6edf3" opacity="0.52"/><rect x="983.66" y="288.56" width="1.56" height="1" fill="#79c0ff" opacity="0.36"/><rect x="958.23" y="290.09" width="2.34" height="1" fill="#d2a8ff" opacity="0.41"/><rect x="962.13" y="290.09" width="3.90" height="1" fill="#d2a8ff" opacity="0.50"/><rect x="966.81" y="290.09" width="4.68" height="1" fill="#a5d6ff" opacity="0.52"/><rect x="973.05" y="290.09" width="2.34" height="1" fill="#ffa657" opacity="0.51"/><rect x="955.42" y="291.62" width="7.02" height="1" fill="#79c0ff" opacity="0.31"/><rect x="952.62" y="293.16" width="5.46" height="1" fill="#ff7b72" opacity="0.35"/><rect x="959.64" y="293.16" width="3.12" height="1" fill="#d2a8ff" opacity="0.45"/><rect x="963.54" y="293.16" width="7.02" height="1" fill="#79c0ff" opacity="0.34"/><rect x="952.62" y="294.69" width="2.34" height="1" fill="#d2a8ff" opacity="0.48"/><rect x="956.52" y="294.69" width="7.80" height="1" fill="#e6edf3" opacity="0.52"/><rect x="965.10" y="294.69" width="4.68" height="1" fill="#ff7b72" opacity="0.40"/><rect x="971.34" y="294.69" width="1.56" height="1" fill="#ffa657" opacity="0.38"/><rect x="973.68" y="294.69" width="3.90" height="1" fill="#79c0ff" opacity="0.42"/><rect x="978.36" y="294.69" width="4.68" height="1" fill="#d2a8ff" opacity="0.44"/><rect x="983.82" y="294.69" width="5.46" height="1" fill="#79c0ff" opacity="0.54"/><rect x="990.84" y="294.69" width="3.12" height="1" fill="#79c0ff" opacity="0.44"/><rect x="995.52" y="294.69" width="2.34" height="1" fill="#79c0ff" opacity="0.41"/><rect x="952.62" y="296.22" width="3.12" height="1" fill="#e6edf3" opacity="0.54"/><rect x="957.30" y="296.22" width="5.46" height="1" fill="#79c0ff" opacity="0.53"/><rect x="963.54" y="296.22" width="7.02" height="1" fill="#79c0ff" opacity="0.50"/><rect x="971.34" y="296.22" width="5.46" height="1" fill="#79c0ff" opacity="0.42"/><rect x="955.42" y="297.76" width="3.90" height="1" fill="#ff7b72" opacity="0.44"/><rect x="960.10" y="297.76" width="3.90" height="1" fill="#d2a8ff" opacity="0.47"/><rect x="964.78" y="297.76" width="5.46" height="1" fill="#ff7b72" opacity="0.41"/><rect x="955.42" y="299.29" width="3.12" height="1" fill="#d2a8ff" opacity="0.51"/><rect x="959.32" y="299.29" width="6.24" height="1" fill="#d2a8ff" opacity="0.39"/><rect x="966.34" y="299.29" width="4.68" height="1" fill="#a5d6ff" opacity="0.41"/><rect x="972.58" y="299.29" width="7.02" height="1" fill="#e6edf3" opacity="0.54"/><rect x="980.38" y="299.29" width="2.34" height="1" fill="#a5d6ff" opacity="0.32"/><rect x="983.50" y="299.29" width="7.80" height="1" fill="#79c0ff" opacity="0.34"/><rect x="992.08" y="299.29" width="3.12" height="1" fill="#e6edf3" opacity="0.47"/><rect x="958.23" y="300.82" width="5.46" height="1" fill="#ff7b72" opacity="0.36"/><rect x="965.25" y="300.82" width="2.34" height="1" fill="#79c0ff" opacity="0.53"/><rect x="968.37" y="300.82" width="5.46" height="1" fill="#a5d6ff" opacity="0.45"/><rect x="974.61" y="300.82" width="2.34" height="1" fill="#79c0ff" opacity="0.37"/><rect x="958.23" y="302.35" width="3.12" height="1" fill="#e6edf3" opacity="0.39"/><rect x="962.13" y="302.35" width="4.68" height="1" fill="#a5d6ff" opacity="0.30"/><rect x="968.37" y="302.35" width="5.46" height="1" fill="#79c0ff" opacity="0.34"/><rect x="974.61" y="302.35" width="5.46" height="1" fill="#e6edf3" opacity="0.42"/><rect x="980.85" y="302.35" width="1.56" height="1" fill="#e6edf3" opacity="0.40"/><rect x="983.19" y="302.35" width="5.46" height="1" fill="#e6edf3" opacity="0.30"/><rect x="989.43" y="302.35" width="4.68" height="1" fill="#ff7b72" opacity="0.48"/><rect x="994.89" y="302.35" width="7.80" height="1" fill="#e6edf3" opacity="0.34"/><rect x="955.42" y="303.89" width="6.24" height="1" fill="#ffa657" opacity="0.33"/><rect x="963.22" y="303.89" width="7.80" height="1" fill="#a5d6ff" opacity="0.42"/><rect x="958.23" y="305.42" width="2.34" height="1" fill="#e6edf3" opacity="0.54"/><rect x="962.13" y="305.42" width="4.68" height="1" fill="#a5d6ff" opacity="0.35"/><rect x="955.42" y="306.95" width="6.24" height="1" fill="#e6edf3" opacity="0.38"/><rect x="962.44" y="306.95" width="5.46" height="1" fill="#ff7b72" opacity="0.43"/><rect x="968.68" y="306.95" width="3.90" height="1" fill="#ff7b72" opacity="0.38"/><rect x="974.14" y="306.95" width="5.46" height="1" fill="#79c0ff" opacity="0.42"/><rect x="955.42" y="308.49" width="0.90" height="1" fill="#e3b341" opacity="0.4"/><rect x="955.42" y="313.09" width="5.46" height="1" fill="#e6edf3" opacity="0.48"/><rect x="961.66" y="313.09" width="6.24" height="1" fill="#79c0ff" opacity="0.42"/><rect x="952.62" y="316.15" width="7.80" height="1" fill="#d2a8ff" opacity="0.49"/><rect x="961.20" y="316.15" width="2.34" height="1" fill="#e6edf3" opacity="0.46"/><rect x="964.32" y="316.15" width="6.24" height="1" fill="#d2a8ff" opacity="0.44"/><rect x="972.12" y="316.15" width="5.46" height="1" fill="#e6edf3" opacity="0.40"/><rect x="979.14" y="316.15" width="2.34" height="1" fill="#79c0ff" opacity="0.31"/><rect x="952.62" y="319.22" width="7.80" height="1" fill="#ffa657" opacity="0.33"/><rect x="955.42" y="322.28" width="7.02" height="1" fill="#ffa657" opacity="0.39"/><rect x="963.22" y="322.28" width="7.02" height="1" fill="#d2a8ff" opacity="0.52"/><rect x="971.02" y="322.28" width="2.34" height="1" fill="#ffa657" opacity="0.48"/><rect x="974.92" y="322.28" width="6.24" height="1" fill="#e6edf3" opacity="0.52"/><rect x="958.23" y="323.82" width="7.02" height="1" fill="#e6edf3" opacity="0.37"/><rect x="958.23" y="325.35" width="2.34" height="1" fill="#ff7b72" opacity="0.39"/><rect x="961.35" y="325.35" width="6.24" height="1" fill="#e6edf3" opacity="0.33"/><rect x="968.37" y="325.35" width="3.90" height="1" fill="#79c0ff" opacity="0.44"/><rect x="958.23" y="326.88" width="5.46" height="1" fill="#ffa657" opacity="0.53"/><rect x="964.47" y="326.88" width="3.12" height="1" fill="#79c0ff" opacity="0.38"/><rect x="955.42" y="328.42" width="5.46" height="1" fill="#d2a8ff" opacity="0.33"/><rect x="961.66" y="328.42" width="3.12" height="1" fill="#a5d6ff" opacity="0.33"/><rect x="965.56" y="328.42" width="7.02" height="1" fill="#79c0ff" opacity="0.33"/><rect x="955.42" y="331.48" width="1.60" height="1" fill="#ff9bce" opacity="0.4"/><rect x="952.62" y="333.01" width="4.68" height="1" fill="#ff7b72" opacity="0.47"/><rect x="958.08" y="333.01" width="2.34" height="1" fill="#79c0ff" opacity="0.41"/><rect x="961.20" y="333.01" width="1.56" height="1" fill="#a5d6ff" opacity="0.33"/><rect x="963.54" y="333.01" width="6.24" height="1" fill="#e6edf3" opacity="0.50"/><rect x="952.62" y="334.55" width="7.80" height="1" fill="#ff7b72" opacity="0.49"/><rect x="961.20" y="334.55" width="7.80" height="1" fill="#e6edf3" opacity="0.36"/><rect x="955.42" y="336.08" width="1.60" height="1" fill="#ff9bce" opacity="0.4"/><rect x="958.23" y="337.61" width="6.24" height="1" fill="#ff7b72" opacity="0.50"/><rect x="965.25" y="337.61" width="4.68" height="1" fill="#79c0ff" opacity="0.51"/><rect x="971.49" y="337.61" width="2.34" height="1" fill="#79c0ff" opacity="0.34"/><rect x="955.42" y="339.15" width="23.22" height="1" fill="#8b949e" opacity="0.35"/><rect x="958.23" y="342.21" width="1.56" height="1" fill="#ffa657" opacity="0.45"/><rect x="960.57" y="342.21" width="4.68" height="1" fill="#a5d6ff" opacity="0.40"/><rect x="966.03" y="342.21" width="7.80" height="1" fill="#79c0ff" opacity="0.45"/><rect x="974.61" y="342.21" width="7.02" height="1" fill="#e6edf3" opacity="0.34"/><rect x="955.42" y="343.75" width="3.90" height="1" fill="#ff7b72" opacity="0.43"/><rect x="960.10" y="343.75" width="5.46" height="1" fill="#79c0ff" opacity="0.50"/><rect x="967.12" y="343.75" width="4.68" height="1" fill="#79c0ff" opacity="0.49"/><rect x="952.62" y="345.28" width="30.12" height="1" fill="#8b949e" opacity="0.35"/><rect x="952.62" y="346.81" width="7.02" height="1" fill="#79c0ff" opacity="0.32"/><rect x="960.42" y="346.81" width="2.34" height="1" fill="#79c0ff" opacity="0.34"/><rect x="964.32" y="346.81" width="1.56" height="1" fill="#e6edf3" opacity="0.53"/><rect x="952.62" y="348.34" width="0.90" height="1" fill="#e3b341" opacity="0.4"/><rect x="952.62" y="349.88" width="3.12" height="1" fill="#ff7b72" opacity="0.53"/><rect x="956.52" y="349.88" width="6.24" height="1" fill="#e6edf3" opacity="0.55"/><rect x="963.54" y="349.88" width="7.80" height="1" fill="#79c0ff" opacity="0.32"/><rect x="972.12" y="349.88" width="5.46" height="1" fill="#ff7b72" opacity="0.32"/><rect x="978.36" y="349.88" width="3.12" height="1" fill="#79c0ff" opacity="0.33"/><rect x="982.26" y="349.88" width="1.56" height="1" fill="#79c0ff" opacity="0.42"/><rect x="985.38" y="349.88" width="3.12" height="1" fill="#ff7b72" opacity="0.55"/><rect x="989.28" y="349.88" width="4.68" height="1" fill="#79c0ff" opacity="0.31"/><rect x="994.74" y="349.88" width="6.24" height="1" fill="#ffa657" opacity="0.49"/><rect x="952.62" y="351.41" width="7.80" height="1" fill="#ffa657" opacity="0.55"/><rect x="961.20" y="351.41" width="6.24" height="1" fill="#79c0ff" opacity="0.47"/><rect x="969.00" y="351.41" width="3.12" height="1" fill="#79c0ff" opacity="0.33"/><rect x="972.90" y="351.41" width="6.24" height="1" fill="#e6edf3" opacity="0.37"/><rect x="979.92" y="351.41" width="1.56" height="1" fill="#e6edf3" opacity="0.32"/><rect x="982.26" y="351.41" width="1.56" height="1" fill="#ffa657" opacity="0.33"/><rect x="984.60" y="351.41" width="3.90" height="1" fill="#d2a8ff" opacity="0.52"/><rect x="990.06" y="351.41" width="3.90" height="1" fill="#79c0ff" opacity="0.45"/><rect x="995.52" y="351.41" width="1.56" height="1" fill="#e6edf3" opacity="0.39"/><rect x="997.86" y="351.41" width="2.34" height="1" fill="#ff7b72" opacity="0.42"/><rect x="952.62" y="352.94" width="6.24" height="1" fill="#e6edf3" opacity="0.53"/><rect x="960.42" y="352.94" width="7.02" height="1" fill="#e6edf3" opacity="0.33"/><rect x="969.00" y="352.94" width="2.34" height="1" fill="#d2a8ff" opacity="0.40"/><rect x="952.62" y="354.48" width="7.80" height="1" fill="#ff7b72" opacity="0.48"/><rect x="952.62" y="356.01" width="0.90" height="1" fill="#ff9bce" opacity="0.4"/><rect x="952.62" y="357.54" width="5.46" height="1" fill="#ff7b72" opacity="0.31"/><rect x="958.86" y="357.54" width="7.02" height="1" fill="#e6edf3" opacity="0.48"/><rect x="966.66" y="357.54" width="3.12" height="1" fill="#ffa657" opacity="0.40"/><rect x="970.56" y="357.54" width="3.90" height="1" fill="#ffa657" opacity="0.39"/><rect x="976.02" y="357.54" width="5.46" height="1" fill="#e6edf3" opacity="0.46"/><rect x="982.26" y="357.54" width="2.34" height="1" fill="#ff7b72" opacity="0.38"/><rect x="986.16" y="357.54" width="7.02" height="1" fill="#a5d6ff" opacity="0.43"/><rect x="993.96" y="357.54" width="3.90" height="1" fill="#ffa657" opacity="0.53"/><rect x="952.62" y="359.08" width="3.12" height="1" fill="#ff7b72" opacity="0.41"/><rect x="956.52" y="359.08" width="6.24" height="1" fill="#ffa657" opacity="0.51"/><rect x="963.54" y="359.08" width="5.46" height="1" fill="#e6edf3" opacity="0.36"/><rect x="969.78" y="359.08" width="5.46" height="1" fill="#d2a8ff" opacity="0.38"/><rect x="976.02" y="359.08" width="5.46" height="1" fill="#e6edf3" opacity="0.30"/><rect x="952.62" y="360.61" width="7.02" height="1" fill="#ff7b72" opacity="0.35"/><rect x="961.20" y="360.61" width="4.68" height="1" fill="#ffa657" opacity="0.48"/><rect x="966.66" y="360.61" width="3.12" height="1" fill="#e6edf3" opacity="0.34"/><rect x="952.62" y="362.14" width="5.46" height="1" fill="#79c0ff" opacity="0.38"/><rect x="952.62" y="363.68" width="3.12" height="1" fill="#d2a8ff" opacity="0.32"/><rect x="956.52" y="363.68" width="1.56" height="1" fill="#e6edf3" opacity="0.43"/><rect x="958.86" y="363.68" width="3.90" height="1" fill="#ffa657" opacity="0.40"/><rect x="952.62" y="366.74" width="7.80" height="1" fill="#d2a8ff" opacity="0.45"/><rect x="961.20" y="366.74" width="6.24" height="1" fill="#e6edf3" opacity="0.46"/><rect x="968.22" y="366.74" width="7.80" height="1" fill="#a5d6ff" opacity="0.50"/><rect x="952.62" y="369.81" width="4.68" height="1" fill="#ff7b72" opacity="0.34"/><rect x="958.08" y="369.81" width="3.90" height="1" fill="#ffa657" opacity="0.52"/><rect x="952.62" y="372.87" width="6.24" height="1" fill="#ffa657" opacity="0.55"/><rect x="952.62" y="374.41" width="6.24" height="1" fill="#79c0ff" opacity="0.46"/><rect x="955.42" y="375.94" width="1.56" height="1" fill="#d2a8ff" opacity="0.36"/><rect x="957.76" y="375.94" width="3.12" height="1" fill="#ffa657" opacity="0.34"/><rect x="962.44" y="375.94" width="4.68" height="1" fill="#79c0ff" opacity="0.44"/><rect x="968.68" y="375.94" width="5.46" height="1" fill="#d2a8ff" opacity="0.52"/><rect x="975.70" y="375.94" width="6.24" height="1" fill="#ffa657" opacity="0.36"/><rect x="982.72" y="375.94" width="7.80" height="1" fill="#ffa657" opacity="0.35"/><rect x="955.42" y="379.01" width="0.90" height="1" fill="#ff9bce" opacity="0.4"/><rect x="955.42" y="380.54" width="0.90" height="1" fill="#e6edf3" opacity="0.4"/><rect x="955.42" y="382.07" width="4.68" height="1" fill="#ffa657" opacity="0.41"/><rect x="961.66" y="382.07" width="1.56" height="1" fill="#ff7b72" opacity="0.33"/><rect x="955.42" y="383.60" width="7.02" height="1" fill="#ff7b72" opacity="0.42"/><rect x="952.62" y="385.14" width="1.56" height="1" fill="#ff7b72" opacity="0.35"/><rect x="954.96" y="385.14" width="2.34" height="1" fill="#e6edf3" opacity="0.53"/><rect x="958.08" y="385.14" width="3.90" height="1" fill="#79c0ff" opacity="0.49"/><rect x="963.54" y="385.14" width="4.68" height="1" fill="#ff7b72" opacity="0.50"/><rect x="969.00" y="385.14" width="2.34" height="1" fill="#ff7b72" opacity="0.46"/><rect x="952.62" y="386.67" width="3.90" height="1" fill="#ff7b72" opacity="0.45"/><rect x="958.08" y="386.67" width="1.56" height="1" fill="#79c0ff" opacity="0.42"/><rect x="960.42" y="386.67" width="1.56" height="1" fill="#a5d6ff" opacity="0.52"/><rect x="952.62" y="389.74" width="3.90" height="1" fill="#e6edf3" opacity="0.38"/><rect x="952.62" y="391.27" width="4.68" height="1" fill="#ff7b72" opacity="0.36"/><rect x="952.62" y="392.80" width="3.12" height="1" fill="#d2a8ff" opacity="0.41"/><rect x="956.52" y="392.80" width="4.68" height="1" fill="#e6edf3" opacity="0.46"/><rect x="961.98" y="392.80" width="2.34" height="1" fill="#a5d6ff" opacity="0.54"/><rect x="955.42" y="394.34" width="3.90" height="1" fill="#d2a8ff" opacity="0.43"/><rect x="960.10" y="394.34" width="7.80" height="1" fill="#a5d6ff" opacity="0.34"/><rect x="968.68" y="394.34" width="5.46" height="1" fill="#e6edf3" opacity="0.34"/><rect x="975.70" y="394.34" width="4.68" height="1" fill="#79c0ff" opacity="0.48"/><rect x="981.94" y="394.34" width="5.46" height="1" fill="#a5d6ff" opacity="0.39"/><rect x="988.96" y="394.34" width="6.24" height="1" fill="#79c0ff" opacity="0.35"/><rect x="958.23" y="397.40" width="3.12" height="1" fill="#ff7b72" opacity="0.44"/><rect x="962.13" y="397.40" width="7.80" height="1" fill="#79c0ff" opacity="0.54"/><rect x="958.23" y="398.93" width="34.52" height="1" fill="#8b949e" opacity="0.35"/><rect x="955.42" y="400.47" width="2.34" height="1" fill="#ff7b72" opacity="0.51"/><rect x="959.32" y="400.47" width="2.34" height="1" fill="#ff7b72" opacity="0.43"/><rect x="955.42" y="403.53" width="7.80" height="1" fill="#e6edf3" opacity="0.35"/><rect x="964.78" y="403.53" width="3.12" height="1" fill="#a5d6ff" opacity="0.34"/><rect x="968.68" y="403.53" width="7.02" height="1" fill="#ffa657" opacity="0.45"/><rect x="955.42" y="405.07" width="2.34" height="1" fill="#d2a8ff" opacity="0.50"/><rect x="959.32" y="405.07" width="4.68" height="1" fill="#79c0ff" opacity="0.40"/><rect x="964.78" y="405.07" width="3.90" height="1" fill="#ffa657" opacity="0.39"/><rect x="969.46" y="405.07" width="2.34" height="1" fill="#79c0ff" opacity="0.34"/><rect x="958.23" y="408.13" width="19.10" height="1" fill="#8b949e" opacity="0.35"/><rect x="955.42" y="409.67" width="6.24" height="1" fill="#ff7b72" opacity="0.32"/><rect x="962.44" y="409.67" width="4.68" height="1" fill="#e6edf3" opacity="0.41"/><rect x="958.23" y="412.73" width="3.90" height="1" fill="#ffa657" opacity="0.53"/><rect x="955.42" y="414.26" width="4.68" height="1" fill="#ff7b72" opacity="0.36"/><rect x="961.66" y="414.26" width="4.68" height="1" fill="#a5d6ff" opacity="0.35"/><rect x="967.12" y="414.26" width="7.80" height="1" fill="#ff7b72" opacity="0.40"/><rect x="952.62" y="415.80" width="1.56" height="1" fill="#ff7b72" opacity="0.47"/><rect x="955.74" y="415.80" width="2.34" height="1" fill="#79c0ff" opacity="0.54"/><rect x="958.86" y="415.80" width="1.56" height="1" fill="#79c0ff" opacity="0.31"/><rect x="952.62" y="417.33" width="7.80" height="1" fill="#ff7b72" opacity="0.44"/><rect x="961.20" y="417.33" width="2.34" height="1" fill="#e6edf3" opacity="0.31"/><rect x="952.62" y="418.86" width="5.46" height="1" fill="#d2a8ff" opacity="0.31"/><rect x="952.62" y="420.40" width="4.68" height="1" fill="#d2a8ff" opacity="0.44"/><rect x="958.86" y="420.40" width="1.56" height="1" fill="#e6edf3" opacity="0.45"/><rect x="961.98" y="420.40" width="5.46" height="1" fill="#a5d6ff" opacity="0.50"/><rect x="952.62" y="423.46" width="2.34" height="1" fill="#79c0ff" opacity="0.53"/><rect x="952.62" y="425.00" width="39.47" height="1" fill="#8b949e" opacity="0.35"/><rect x="952.62" y="426.53" width="3.90" height="1" fill="#ffa657" opacity="0.36"/><rect x="952.62" y="428.06" width="7.80" height="1" fill="#79c0ff" opacity="0.55"/><rect x="961.98" y="428.06" width="7.80" height="1" fill="#ff7b72" opacity="0.44"/><rect x="970.56" y="428.06" width="1.56" height="1" fill="#e6edf3" opacity="0.33"/><rect x="972.90" y="428.06" width="7.80" height="1" fill="#79c0ff" opacity="0.39"/><rect x="981.48" y="428.06" width="6.24" height="1" fill="#d2a8ff" opacity="0.50"/><rect x="988.50" y="428.06" width="5.46" height="1" fill="#e6edf3" opacity="0.51"/><rect x="995.52" y="428.06" width="6.24" height="1" fill="#79c0ff" opacity="0.34"/><rect x="952.62" y="429.59" width="2.40" height="1" fill="#e3b341" opacity="0.4"/><rect x="955.42" y="432.66" width="6.24" height="1" fill="#ff7b72" opacity="0.44"/><rect x="962.44" y="432.66" width="1.56" height="1" fill="#d2a8ff" opacity="0.34"/><rect x="964.78" y="432.66" width="7.02" height="1" fill="#ffa657" opacity="0.52"/><rect x="955.42" y="435.73" width="4.68" height="1" fill="#ff7b72" opacity="0.33"/><rect x="960.88" y="435.73" width="4.68" height="1" fill="#e6edf3" opacity="0.38"/><rect x="966.34" y="435.73" width="4.68" height="1" fill="#79c0ff" opacity="0.47"/><rect x="955.42" y="437.26" width="1.56" height="1" fill="#79c0ff" opacity="0.36"/><rect x="957.76" y="437.26" width="6.24" height="1" fill="#79c0ff" opacity="0.44"/><rect x="965.56" y="437.26" width="4.68" height="1" fill="#79c0ff" opacity="0.51"/><rect x="971.02" y="437.26" width="7.02" height="1" fill="#a5d6ff" opacity="0.53"/><rect x="958.23" y="438.79" width="1.60" height="1" fill="#ff9bce" opacity="0.4"/><rect x="961.04" y="440.33" width="7.02" height="1" fill="#ffa657" opacity="0.49"/><rect x="968.84" y="440.33" width="3.90" height="1" fill="#e6edf3" opacity="0.34"/><rect x="973.52" y="440.33" width="3.90" height="1" fill="#d2a8ff" opacity="0.37"/><rect x="963.85" y="443.39" width="5.46" height="1" fill="#e6edf3" opacity="0.45"/><rect x="970.09" y="443.39" width="3.90" height="1" fill="#a5d6ff" opacity="0.32"/><rect x="966.66" y="444.92" width="22.82" height="1" fill="#8b949e" opacity="0.35"/><rect x="969.46" y="447.99" width="7.80" height="1" fill="#ffa657" opacity="0.36"/><rect x="978.04" y="447.99" width="3.90" height="1" fill="#79c0ff" opacity="0.39"/><rect x="969.46" y="449.52" width="6.24" height="1" fill="#ff7b72" opacity="0.51"/><rect x="977.26" y="449.52" width="1.56" height="1" fill="#ffa657" opacity="0.49"/><rect x="980.38" y="449.52" width="3.90" height="1" fill="#a5d6ff" opacity="0.45"/><rect x="969.46" y="451.06" width="4.68" height="1" fill="#ff7b72" opacity="0.48"/><rect x="974.92" y="451.06" width="7.02" height="1" fill="#d2a8ff" opacity="0.32"/><rect x="982.72" y="451.06" width="6.24" height="1" fill="#79c0ff" opacity="0.55"/><rect x="969.46" y="454.12" width="16.02" height="1" fill="#8b949e" opacity="0.35"/><rect x="969.46" y="455.66" width="3.12" height="1" fill="#ff7b72" opacity="0.39"/><rect x="973.36" y="455.66" width="7.02" height="1" fill="#ffa657" opacity="0.44"/><rect x="981.16" y="455.66" width="3.12" height="1" fill="#d2a8ff" opacity="0.46"/><rect x="985.06" y="455.66" width="5.46" height="1" fill="#79c0ff" opacity="0.49"/><rect x="969.46" y="458.72" width="2.40" height="1" fill="#e6edf3" opacity="0.4"/><rect x="969.46" y="460.25" width="6.24" height="1" fill="#e6edf3" opacity="0.39"/><rect x="976.48" y="460.25" width="7.80" height="1" fill="#ff7b72" opacity="0.50"/><rect x="985.06" y="460.25" width="7.80" height="1" fill="#a5d6ff" opacity="0.47"/><rect x="994.42" y="460.25" width="3.90" height="1" fill="#d2a8ff" opacity="0.44"/><rect x="972.27" y="463.32" width="0.90" height="1" fill="#e6edf3" opacity="0.4"/><rect x="972.27" y="466.39" width="6.24" height="1" fill="#d2a8ff" opacity="0.51"/><rect x="980.07" y="466.39" width="7.02" height="1" fill="#e6edf3" opacity="0.34"/><rect x="987.87" y="466.39" width="2.34" height="1" fill="#ff7b72" opacity="0.37"/><rect x="972.27" y="467.92" width="3.12" height="1" fill="#d2a8ff" opacity="0.32"/><rect x="972.27" y="469.45" width="3.12" height="1" fill="#ff7b72" opacity="0.50"/><rect x="976.95" y="469.45" width="7.80" height="1" fill="#a5d6ff" opacity="0.35"/><rect x="969.46" y="472.52" width="3.90" height="1" fill="#ffa657" opacity="0.48"/><rect x="974.92" y="472.52" width="6.24" height="1" fill="#79c0ff" opacity="0.39"/><rect x="981.94" y="472.52" width="5.46" height="1" fill="#e6edf3" opacity="0.45"/><rect x="988.18" y="472.52" width="6.24" height="1" fill="#d2a8ff" opacity="0.32"/><rect x="995.20" y="472.52" width="2.34" height="1" fill="#79c0ff" opacity="0.31"/><rect x="966.66" y="475.58" width="7.02" height="1" fill="#ff7b72" opacity="0.53"/><rect x="974.46" y="475.58" width="2.34" height="1" fill="#79c0ff" opacity="0.43"/><rect x="978.36" y="475.58" width="3.12" height="1" fill="#ff7b72" opacity="0.49"/><rect x="982.26" y="475.58" width="3.90" height="1" fill="#e6edf3" opacity="0.44"/><rect x="986.94" y="475.58" width="6.24" height="1" fill="#79c0ff" opacity="0.35"/><rect x="994.74" y="475.58" width="4.68" height="1" fill="#79c0ff" opacity="0.43"/><rect x="969.46" y="477.12" width="5.46" height="1" fill="#e6edf3" opacity="0.34"/><rect x="975.70" y="477.12" width="7.02" height="1" fill="#e6edf3" opacity="0.52"/><rect x="966.66" y="480.18" width="7.02" height="1" fill="#ff7b72" opacity="0.43"/><rect x="974.46" y="480.18" width="7.80" height="1" fill="#ffa657" opacity="0.36"/><rect x="983.04" y="480.18" width="7.80" height="1" fill="#79c0ff" opacity="0.42"/><rect x="963.85" y="481.72" width="7.02" height="1" fill="#ff7b72" opacity="0.35"/><rect x="971.65" y="481.72" width="5.46" height="1" fill="#e6edf3" opacity="0.47"/><rect x="978.67" y="481.72" width="3.12" height="1" fill="#ff7b72" opacity="0.32"/><rect x="961.04" y="483.25" width="0.90" height="1" fill="#ff9bce" opacity="0.4"/><rect x="958.23" y="484.78" width="7.02" height="1" fill="#ff7b72" opacity="0.50"/><rect x="966.03" y="484.78" width="7.80" height="1" fill="#d2a8ff" opacity="0.53"/><rect x="974.61" y="484.78" width="7.80" height="1" fill="#ffa657" opacity="0.38"/><rect x="958.23" y="486.32" width="1.56" height="1" fill="#ff7b72" opacity="0.31"/><rect x="960.57" y="486.32" width="2.34" height="1" fill="#e6edf3" opacity="0.44"/><rect x="963.69" y="486.32" width="5.46" height="1" fill="#79c0ff" opacity="0.37"/><rect x="970.71" y="486.32" width="5.46" height="1" fill="#e6edf3" opacity="0.32"/><rect x="955.42" y="487.85" width="7.80" height="1" fill="#79c0ff" opacity="0.39"/><rect x="964.78" y="487.85" width="3.90" height="1" fill="#ffa657" opacity="0.37"/><rect x="955.42" y="489.38" width="2.40" height="1" fill="#ff9bce" opacity="0.4"/><rect x="955.42" y="490.91" width="2.34" height="1" fill="#e6edf3" opacity="0.31"/><rect x="959.32" y="490.91" width="6.24" height="1" fill="#79c0ff" opacity="0.46"/><rect x="967.12" y="490.91" width="1.56" height="1" fill="#79c0ff" opacity="0.38"/><rect x="955.42" y="492.45" width="1.60" height="1" fill="#ff9bce" opacity="0.4"/><rect x="955.42" y="493.98" width="1.60" height="1" fill="#ff9bce" opacity="0.4"/><rect x="955.42" y="497.05" width="4.68" height="1" fill="#d2a8ff" opacity="0.49"/><rect x="961.66" y="497.05" width="1.56" height="1" fill="#ffa657" opacity="0.34"/><rect x="964.00" y="497.05" width="6.24" height="1" fill="#a5d6ff" opacity="0.40"/><rect x="971.80" y="497.05" width="5.46" height="1" fill="#a5d6ff" opacity="0.33"/><rect x="978.04" y="497.05" width="4.68" height="1" fill="#a5d6ff" opacity="0.39"/><rect x="984.28" y="497.05" width="1.56" height="1" fill="#d2a8ff" opacity="0.43"/><rect x="955.42" y="498.58" width="2.40" height="1" fill="#e3b341" opacity="0.4"/><rect x="955.42" y="500.11" width="0.90" height="1" fill="#e6edf3" opacity="0.4"/><rect x="955.42" y="501.65" width="0.90" height="1" fill="#e6edf3" opacity="0.4"/><rect x="955.42" y="504.71" width="4.68" height="1" fill="#e6edf3" opacity="0.54"/><rect x="960.88" y="504.71" width="7.80" height="1" fill="#a5d6ff" opacity="0.38"/><rect x="969.46" y="504.71" width="3.12" height="1" fill="#ffa657" opacity="0.30"/><rect x="973.36" y="504.71" width="3.12" height="1" fill="#a5d6ff" opacity="0.41"/><rect x="958.23" y="506.24" width="4.68" height="1" fill="#ff7b72" opacity="0.48"/><rect x="961.04" y="507.78" width="5.46" height="1" fill="#e6edf3" opacity="0.49"/><rect x="968.06" y="507.78" width="5.46" height="1" fill="#e6edf3" opacity="0.46"/><rect x="974.30" y="507.78" width="7.02" height="1" fill="#e6edf3" opacity="0.32"/><rect x="982.10" y="507.78" width="2.34" height="1" fill="#a5d6ff" opacity="0.39"/><rect x="986.00" y="507.78" width="3.12" height="1" fill="#a5d6ff" opacity="0.49"/><rect x="990.68" y="507.78" width="7.02" height="1" fill="#d2a8ff" opacity="0.35"/><rect x="961.04" y="509.31" width="3.12" height="1" fill="#79c0ff" opacity="0.30"/><rect x="965.72" y="509.31" width="3.12" height="1" fill="#79c0ff" opacity="0.46"/><rect x="969.62" y="509.31" width="3.12" height="1" fill="#79c0ff" opacity="0.51"/><rect x="973.52" y="509.31" width="7.80" height="1" fill="#79c0ff" opacity="0.42"/><rect x="982.10" y="509.31" width="2.34" height="1" fill="#a5d6ff" opacity="0.44"/><rect x="986.00" y="509.31" width="5.46" height="1" fill="#ffa657" opacity="0.39"/><rect x="963.85" y="510.84" width="3.90" height="1" fill="#ff7b72" opacity="0.34"/><rect x="969.31" y="510.84" width="1.56" height="1" fill="#79c0ff" opacity="0.40"/><rect x="961.04" y="515.44" width="2.40" height="1" fill="#ff9bce" opacity="0.4"/><rect x="961.04" y="516.98" width="2.34" height="1" fill="#ff7b72" opacity="0.32"/><rect x="964.16" y="516.98" width="7.02" height="1" fill="#a5d6ff" opacity="0.44"/><rect x="971.96" y="516.98" width="3.12" height="1" fill="#e6edf3" opacity="0.43"/><rect x="975.86" y="516.98" width="2.34" height="1" fill="#d2a8ff" opacity="0.51"/><rect x="961.04" y="518.51" width="6.24" height="1" fill="#d2a8ff" opacity="0.46"/><rect x="968.06" y="518.51" width="2.34" height="1" fill="#a5d6ff" opacity="0.51"/><rect x="961.04" y="523.11" width="3.12" height="1" fill="#ff7b72" opacity="0.39"/><rect x="965.72" y="523.11" width="7.80" height="1" fill="#d2a8ff" opacity="0.50"/><rect x="975.08" y="523.11" width="7.80" height="1" fill="#ffa657" opacity="0.52"/><rect x="983.66" y="523.11" width="1.56" height="1" fill="#79c0ff" opacity="0.39"/><rect x="961.04" y="527.71" width="6.24" height="1" fill="#e6edf3" opacity="0.52"/><rect x="968.06" y="527.71" width="2.34" height="1" fill="#d2a8ff" opacity="0.33"/><rect x="971.18" y="527.71" width="7.80" height="1" fill="#ffa657" opacity="0.52"/><rect x="961.04" y="529.24" width="0.90" height="1" fill="#e3b341" opacity="0.4"/><rect x="958.23" y="530.77" width="7.02" height="1" fill="#d2a8ff" opacity="0.30"/><rect x="966.03" y="530.77" width="2.34" height="1" fill="#a5d6ff" opacity="0.33"/><rect x="958.23" y="532.31" width="7.80" height="1" fill="#ff7b72" opacity="0.42"/><rect x="958.23" y="533.84" width="7.02" height="1" fill="#ff7b72" opacity="0.47"/></svg><div style="left:1013.00px;top:93.00px;width:11.00px;height:443.00px;background:#0d1117;"></div><div style="left:1013.00px;top:93.00px;width:1.00px;height:443.00px;background:#12161d;"></div><div style="left:1014.00px;top:93.00px;width:10.00px;height:22.00px;background:#161a21;"></div><div style="left:1013.30px;top:290.00px;width:10.70px;height:2.10px;background:#2b62bd;"></div><div style="left:1016.70px;top:289.40px;width:4.40px;height:4.20px;background:#c6c8ca;"></div><div style="left:1013.30px;top:290.00px;width:10.70px;height:2.10px;background:rgba(43,98,189,.55);"></div><div style="left:1016.70px;top:296.30px;width:4.40px;height:4.30px;background:#c6c8ca;"></div><div style="left:0.00px;top:23.00px;width:1024.00px;height:26.00px;background:#0d1117;"></div><div style="left:0.00px;top:49.00px;width:1024.00px;height:1.00px;background:#1f242c;"></div><svg style="left:-4.00px;top:29.50px;" width="17" height="13" viewBox="0 0 17 13"><path d="M13 1.5 L2 10.1 M13 11.4 L2 2.8" stroke="#1c90e8" stroke-width="2.1" fill="none"/><path d="M12.2 0.3 L15.8 1.9 V11 L12.2 12.6 Z" fill="#29a8f5"/></svg><svg style="left:290.00px;top:31.80px;" width="10" height="9" viewBox="0 0 10 9"><path d="M5 0.8 L0.8 4.5 L5 8.2 M0.8 4.5 H9.6" fill="none" stroke="#8b949e" stroke-width="1.1"/></svg><svg style="left:310.00px;top:31.80px;" width="10" height="9" viewBox="0 0 10 9"><path d="M5 0.8 L9.2 4.5 L5 8.2 M9.2 4.5 H0.4" fill="none" stroke="#8b949e" stroke-width="1.1"/></svg><div style="left:331px;top:27px;width:393px;height:18.5px;background:#1a1e26;border:1px solid #2b3038;border-radius:5px"></div><svg style="left:463.50px;top:31.00px;" width="10" height="10" viewBox="0 0 10 10"><circle cx="4.2" cy="4.2" r="3.3" fill="none" stroke="#8b949e" stroke-width="1"/><path d="M6.6 6.6 L9.4 9.4" stroke="#8b949e" stroke-width="1"/></svg><div class="t" style="left:478.50px;top:28.50px;height:16px;line-height:16px;font-size:9.60px;color:#939ba5;letter-spacing:-0.162px;">sp-dev-fx-webparts [GitHub]</div><svg style="left:946.50px;top:29.70px;" width="12.4" height="12.8" viewBox="0 0 12.4 12.8"><rect x="1.05" y="1.05" width="3.9" height="10.6" rx="1.6" fill="none" stroke="#858d98" stroke-width="1.1"/><rect x="7.1" y="1.05" width="4.2" height="4" rx="1.3" fill="none" stroke="#858d98" stroke-width="1.1"/><rect x="7.1" y="7.65" width="4.2" height="4" rx="1.3" fill="none" stroke="#858d98" stroke-width="1.1"/></svg><svg style="left:966.40px;top:29.70px;" width="12.4" height="12.8" viewBox="0 0 12.4 12.8"><rect x="1.05" y="1.05" width="10.1" height="10.6" rx="2.4" fill="none" stroke="#858d98" stroke-width="1.1"/><path d="M3 1.2 H5.6 V11.5 H3 Q1.2 11.5 1.2 9.6 V3.1 Q1.2 1.2 3 1.2 Z" fill="#858d98"/></svg><svg style="left:986.20px;top:29.70px;" width="12.4" height="12.8" viewBox="0 0 12.4 12.8"><rect x="1.05" y="1.05" width="10.1" height="10.6" rx="2.4" fill="none" stroke="#858d98" stroke-width="1.1"/><path d="M1.2 9.1 H11" stroke="#858d98" stroke-width="1.1"/></svg><svg style="left:1006.10px;top:29.70px;" width="12.4" height="12.8" viewBox="0 0 12.4 12.8"><rect x="1.05" y="1.05" width="10.1" height="10.6" rx="2.4" fill="none" stroke="#858d98" stroke-width="1.1"/><path d="M8.1 1.2 V11.5" stroke="#858d98" stroke-width="1.1"/></svg><div style="left:224.00px;top:50.00px;width:800.00px;height:26.00px;background:#010409;"></div><div style="left:224.00px;top:76.00px;width:800.00px;height:1.00px;background:#1f242c;"></div><div style="left:367.00px;top:50.00px;width:1.00px;height:26.00px;background:#1f242c;"></div><div style="left:368.00px;top:50.00px;width:123.00px;height:27.00px;background:#0d1117;"></div><div style="left:368.00px;top:49.60px;width:123.00px;height:1.20px;background:#cf735e;"></div><div style="left:491.00px;top:50.00px;width:1.00px;height:26.00px;background:#1f242c;"></div><svg style="left:232.60px;top:58.80px;" width="11.6" height="9.6" viewBox="0 0 11.6 9.6"><rect x="0.6" y="0.6" width="10.4" height="8.4" rx="1.2" fill="none" stroke="#c9d1d9" stroke-width="1.1"/><path d="M0.8 2.6 H10.8" stroke="#c9d1d9" stroke-width="1.2"/><rect x="2.2" y="4.2" width="3" height="3.2" fill="#c9d1d9"/><path d="M6.4 4.6 H9.4 M6.4 6.8 H9.4" stroke="#c9d1d9" stroke-width="0.9"/></svg><div class="t" style="left:249.00px;top:56.10px;height:16px;line-height:16px;font-size:10.00px;color:#8b949e;letter-spacing:-0.220px;transform:scaleX(0.9709);transform-origin:0 50%;">[Preview] README.md</div><div class="tsi" style="left:378.50px;top:56.09px">TS</div><div class="t" style="left:393.40px;top:55.80px;height:16px;line-height:16px;font-size:10.00px;color:#e6edf3;letter-spacing:-0.220px;transform:scaleX(0.9919);transform-origin:0 50%;">useSummarizer.ts</div><svg style="left:476.00px;top:59.90px;" width="8.4" height="7.4" viewBox="0 0 8.4 7.4"><path d="M0.6 0.5 L7.8 6.9 M7.8 0.5 L0.6 6.9" stroke="#e6edf3" stroke-width="1.15"/></svg><svg style="left:980.20px;top:57.40px;" width="12.2" height="12.2" viewBox="0 0 12.2 12.2"><rect x="1.05" y="1.05" width="10" height="10.1" rx="2.3" fill="none" stroke="#858d98" stroke-width="1.1"/><path d="M6.05 1.2 V11" stroke="#858d98" stroke-width="1.1"/></svg><div style="left:1001.70px;top:62.80px;width:2.00px;height:1.80px;background:#9aa2ab;border-radius:0.6px"></div><div style="left:1005.00px;top:62.80px;width:2.00px;height:1.80px;background:#9aa2ab;border-radius:0.6px"></div><div style="left:1008.30px;top:62.80px;width:2.00px;height:1.80px;background:#9aa2ab;border-radius:0.6px"></div><div style="left:0.00px;top:50.00px;width:28.00px;height:486.00px;background:#0d1117;"></div><div style="left:28.00px;top:50.00px;width:1.00px;height:486.00px;background:#1f242c;"></div><div style="left:5.60px;top:59.90px;width:9.70px;height:1.00px;background:#7d8590;"></div><div style="left:5.60px;top:62.90px;width:9.70px;height:1.00px;background:#7d8590;"></div><div style="left:5.60px;top:66.00px;width:9.70px;height:1.00px;background:#7d8590;"></div><svg style="left:1.50px;top:85.50px;" width="18" height="20.5" viewBox="0 0 18 20.5"><path d="M4 3.6 H3 Q1.25 3.6 1.25 5.4 V17 Q1.25 18.75 3 18.75 H10.6 Q12.2 18.75 12.2 17.2" fill="none" stroke="#e6edf3" stroke-width="1.5"/><path d="M5.4 1.2 H11 L15.8 6 V14.4 Q15.8 16 14.2 16 H5.4 Q3.8 16 3.8 14.4 V2.8 Q3.8 1.2 5.4 1.2 Z" fill="#0d1117" stroke="#e6edf3" stroke-width="1.5"/><path d="M10.6 1.4 V6.4 H15.6" fill="none" stroke="#e6edf3" stroke-width="1.4"/></svg><svg style="left:1.50px;top:123.50px;" width="18" height="18" viewBox="0 0 18 18"><circle cx="7.2" cy="7.2" r="5.6" fill="none" stroke="#8b949e" stroke-width="1.4"/><path d="M11.2 11.2 L16.8 16.8" stroke="#8b949e" stroke-width="1.4"/></svg><svg style="left:2.00px;top:158.50px;" width="17" height="20" viewBox="0 0 17 20"><circle cx="4.4" cy="4" r="2.3" fill="none" stroke="#8b949e" stroke-width="1.3"/><circle cx="4.4" cy="17" r="2.3" fill="none" stroke="#8b949e" stroke-width="1.3"/><circle cx="12.8" cy="7.5" r="2.3" fill="none" stroke="#8b949e" stroke-width="1.3"/><path d="M4.4 6.3 V14.7 M12.8 9.8 Q12.8 12 10.4 12 H4.4" fill="none" stroke="#8b949e" stroke-width="1.3"/></svg><svg style="left:0.00px;top:198.00px;" width="19" height="18" viewBox="0 0 19 18"><path d="M6.6 5.5 V1.6 L17.3 7.6 L10.6 11.6" fill="none" stroke="#8b949e" stroke-width="1.3"/><ellipse cx="6" cy="12.9" rx="2.7" ry="3.3" fill="none" stroke="#8b949e" stroke-width="1.2"/><path d="M3.4 10.6 L1.6 9.4 M8.6 10.6 L10.4 9.4 M3.3 13 H1 M8.7 13 H11 M3.6 15.2 L1.8 16.6 M8.4 15.2 L10.2 16.6 M4.4 9.8 Q6 8.4 7.6 9.8" fill="none" stroke="#8b949e" stroke-width="1.1"/></svg><svg style="left:1.00px;top:234.00px;" width="20" height="18" viewBox="0 0 20 18"><rect x="1.2" y="1.2" width="13.6" height="10.6" rx="1.6" fill="none" stroke="#8b949e" stroke-width="1.3"/><path d="M5.4 14.6 H9 M7.2 12 V14.6" stroke="#8b949e" stroke-width="1.3"/><circle cx="13.4" cy="12.4" r="5" fill="#8b949e" stroke="#0d1117" stroke-width="1"/><path d="M11.2 10.6 L12.8 12.4 L11.2 14.2 M15.6 10.6 L14 12.4 L15.6 14.2" fill="none" stroke="#0d1117" stroke-width="1"/></svg><svg style="left:1.50px;top:270.50px;" width="18" height="17" viewBox="0 0 18 17"><path d="M1.2 3.6 H7.6 V16 H1.2 Z M7.6 9.6 H15.4 V16 H7.6 M1.2 9.6 H7.6" fill="none" stroke="#8b949e" stroke-width="1.3"/><path d="M12.8 1 L16.6 4.8 L12.8 8.6 L9 4.8 Z" fill="none" stroke="#8b949e" stroke-width="1.3"/></svg><svg style="left:1.20px;top:306.20px;" width="18.6" height="18.6" viewBox="0 0 18.6 18.6"><circle cx="9.3" cy="9.3" r="8.4" fill="none" stroke="#8b949e" stroke-width="1.3"/><path d="M9.3 4.6 C7.6 4.6 6.9 5 6.4 4.4 L5.4 4 C5 5 5.2 5.8 5.5 6.3 C4.4 7.6 4.6 10.2 6.2 11.2 C6.8 11.6 7.4 11.7 7.8 11.8 C7.4 12.2 7.3 12.8 7.3 13.4 V17 H11.3 V13.4 C11.3 12.8 11.2 12.2 10.8 11.8 C11.2 11.7 11.8 11.6 12.4 11.2 C14 10.2 14.2 7.6 13.1 6.3 C13.4 5.8 13.6 5 13.2 4 L12.2 4.4 C11.7 5 11 4.6 9.3 4.6 Z" fill="#8b949e"/><path d="M7.4 14.6 C5.8 15 5.4 13.6 4.6 13.4" fill="none" stroke="#8b949e" stroke-width="1"/></svg><svg style="left:2.00px;top:472.40px;" width="17" height="17" viewBox="0 0 17 17"><circle cx="8.5" cy="8.5" r="7.6" fill="none" stroke="#8b949e" stroke-width="1.3"/><circle cx="8.5" cy="6" r="2.4" fill="#8b949e"/><path d="M3.6 9.6 H13.4 A4.9 4.9 0 0 1 3.6 9.6 Z" fill="#8b949e"/></svg><svg style="left:1.30px;top:508.80px;" width="18" height="18" viewBox="0 0 18 18"><path d="M16.72 7.90 L16.72 10.10 L14.62 10.44 L13.99 11.95 L15.24 13.68 L13.68 15.24 L11.95 13.99 L10.44 14.62 L10.10 16.72 L7.90 16.72 L7.56 14.62 L6.05 13.99 L4.32 15.24 L2.76 13.68 L4.01 11.95 L3.38 10.44 L1.28 10.10 L1.28 7.90 L3.38 7.56 L4.01 6.05 L2.76 4.32 L4.32 2.76 L6.05 4.01 L7.56 3.38 L7.90 1.28 L10.10 1.28 L10.44 3.38 L11.95 4.01 L13.68 2.76 L15.24 4.32 L13.99 6.05 L14.62 7.56 Z" fill="none" stroke="#8b949e" stroke-width="1.3" stroke-linejoin="round"/><circle cx="9" cy="9" r="2.3" fill="none" stroke="#8b949e" stroke-width="1.3"/></svg><div style="left:29.00px;top:50.00px;width:195.00px;height:486.00px;background:#010409;"></div><div style="left:223.50px;top:50.00px;width:1.00px;height:486.00px;background:#161b22;"></div><svg style="left:45.30px;top:126.54px;" width="8" height="8" viewBox="0 0 8 8"><path d="M0.8 2.4 L4 5.6 L7.2 2.4" fill="none" stroke="#c9d1d9" stroke-width="1"/></svg><div class="t" style="left:57.70px;top:122.74px;height:16px;line-height:16px;font-size:9.80px;color:#e6edf3;letter-spacing:0.117px;">react-chrome-built-in-ai-summarise...</div><svg style="left:51.50px;top:143.35px;" width="8" height="8" viewBox="0 0 8 8"><path d="M2.4 0.8 L5.6 4 L2.4 7.2" fill="none" stroke="#c9d1d9" stroke-width="1"/></svg><div class="t" style="left:63.90px;top:139.55px;height:16px;line-height:16px;font-size:9.80px;color:#e6edf3;letter-spacing:-0.020px;">.devcontainer</div><svg style="left:51.50px;top:160.16px;" width="8" height="8" viewBox="0 0 8 8"><path d="M2.4 0.8 L5.6 4 L2.4 7.2" fill="none" stroke="#c9d1d9" stroke-width="1"/></svg><div class="t" style="left:63.90px;top:156.37px;height:16px;line-height:16px;font-size:9.80px;color:#7d8590;letter-spacing:-0.220px;transform:scaleX(0.9891);transform-origin:0 50%;">.vscode</div><svg style="left:51.50px;top:176.98px;" width="8" height="8" viewBox="0 0 8 8"><path d="M2.4 0.8 L5.6 4 L2.4 7.2" fill="none" stroke="#c9d1d9" stroke-width="1"/></svg><div class="t" style="left:63.90px;top:173.18px;height:16px;line-height:16px;font-size:9.80px;color:#e6edf3;letter-spacing:-0.220px;transform:scaleX(0.9624);transform-origin:0 50%;">assets</div><svg style="left:51.50px;top:193.79px;" width="8" height="8" viewBox="0 0 8 8"><path d="M2.4 0.8 L5.6 4 L2.4 7.2" fill="none" stroke="#c9d1d9" stroke-width="1"/></svg><div class="t" style="left:63.90px;top:189.99px;height:16px;line-height:16px;font-size:9.80px;color:#e6edf3;letter-spacing:0.240px;">config</div><svg style="left:51.50px;top:210.60px;" width="8" height="8" viewBox="0 0 8 8"><path d="M2.4 0.8 L5.6 4 L2.4 7.2" fill="none" stroke="#c9d1d9" stroke-width="1"/></svg><div class="t" style="left:63.90px;top:206.81px;height:16px;line-height:16px;font-size:9.80px;color:#e6edf3;letter-spacing:0.065px;">sharepoint</div><svg style="left:51.50px;top:227.41px;" width="8" height="8" viewBox="0 0 8 8"><path d="M0.8 2.4 L4 5.6 L7.2 2.4" fill="none" stroke="#c9d1d9" stroke-width="1"/></svg><div class="t" style="left:63.90px;top:223.62px;height:16px;line-height:16px;font-size:9.80px;color:#e6edf3;letter-spacing:-0.220px;transform:scaleX(0.9387);transform-origin:0 50%;">src</div><svg style="left:57.60px;top:244.23px;" width="8" height="8" viewBox="0 0 8 8"><path d="M0.8 2.4 L4 5.6 L7.2 2.4" fill="none" stroke="#c9d1d9" stroke-width="1"/></svg><div class="t" style="left:70.00px;top:240.43px;height:16px;line-height:16px;font-size:9.80px;color:#e6edf3;letter-spacing:0.025px;">hooks</div><div class="tsi" style="left:62.15px;top:257.83px">TS</div><div class="t" style="left:76.25px;top:257.25px;height:16px;line-height:16px;font-size:9.80px;color:#e6edf3;letter-spacing:-0.075px;">index.ts</div><div class="tsi" style="left:62.15px;top:274.64px">TS</div><div class="t" style="left:76.25px;top:274.06px;height:16px;line-height:16px;font-size:9.80px;color:#e6edf3;letter-spacing:-0.059px;">useLanguageDetector.ts</div><div style="left:28.60px;top:289.87px;width:194.40px;height:16.81px;background:#2d313a;"></div><div class="tsi" style="left:62.15px;top:291.46px">TS</div><div class="t" style="left:76.25px;top:290.87px;height:16px;line-height:16px;font-size:9.80px;color:#e6edf3;letter-spacing:-0.112px;">useSummarizer.ts</div><div class="tsi" style="left:62.15px;top:308.27px">TS</div><div class="t" style="left:76.25px;top:307.68px;height:16px;line-height:16px;font-size:9.80px;color:#e6edf3;letter-spacing:-0.220px;transform:scaleX(0.9982);transform-origin:0 50%;">useSummaryCache.ts</div><div class="tsi" style="left:62.15px;top:325.08px">TS</div><div class="t" style="left:76.25px;top:324.50px;height:16px;line-height:16px;font-size:9.80px;color:#e6edf3;letter-spacing:-0.157px;">useTranslator.ts</div><svg style="left:57.60px;top:345.11px;" width="8" height="8" viewBox="0 0 8 8"><path d="M2.4 0.8 L5.6 4 L2.4 7.2" fill="none" stroke="#c9d1d9" stroke-width="1"/></svg><div class="t" style="left:70.00px;top:341.31px;height:16px;line-height:16px;font-size:9.80px;color:#e6edf3;letter-spacing:-0.043px;">types</div><svg style="left:57.60px;top:361.92px;" width="8" height="8" viewBox="0 0 8 8"><path d="M2.4 0.8 L5.6 4 L2.4 7.2" fill="none" stroke="#c9d1d9" stroke-width="1"/></svg><div class="t" style="left:70.00px;top:358.12px;height:16px;line-height:16px;font-size:9.80px;color:#e6edf3;letter-spacing:0.034px;">webparts</div><div class="tsi" style="left:55.90px;top:375.52px">TS</div><div class="t" style="left:70.00px;top:374.94px;height:16px;line-height:16px;font-size:9.80px;color:#e6edf3;letter-spacing:-0.075px;">index.ts</div><svg style="left:51.50px;top:395.54px;" width="8" height="8" viewBox="0 0 8 8"><path d="M2.4 0.8 L5.6 4 L2.4 7.2" fill="none" stroke="#c9d1d9" stroke-width="1"/></svg><div class="t" style="left:63.90px;top:391.75px;height:16px;line-height:16px;font-size:9.80px;color:#e6edf3;letter-spacing:-0.147px;">teams</div><svg style="left:49.20px;top:411.36px;" width="10.2" height="9.6" viewBox="0 0 10.2 9.6"><path d="M0.3 4.8 L2.7 0.4 H7.5 L9.9 4.8 L7.5 9.2 H2.7 Z" fill="#a46fe0"/><circle cx="5.1" cy="4.8" r="2.5" fill="none" stroke="#3d2466" stroke-width="1.1"/><circle cx="5.1" cy="4.8" r="1.5" fill="#b88af0"/></svg><div class="t" style="left:63.90px;top:408.56px;height:16px;line-height:16px;font-size:9.80px;color:#e6edf3;letter-spacing:-0.110px;">.eslintrc.js</div><svg style="left:49.90px;top:428.57px;" width="9" height="9" viewBox="0 0 9 9"><path d="M4.5 0.4 L8.6 4.5 L4.5 8.6 L0.4 4.5 Z" fill="#566573"/><path d="M3.4 2.6 L5.6 4.8 M4.5 3.7 V6.4" stroke="#1a2128" stroke-width="0.9" fill="none"/></svg><div class="t" style="left:63.90px;top:425.38px;height:16px;line-height:16px;font-size:9.80px;color:#e6edf3;letter-spacing:0.165px;">.gitignore</div><div style="left:48.90px;top:446.18px;width:11.50px;height:4.50px;background:#c8323a;border-radius:0.6px"></div><div style="left:50.50px;top:447.48px;width:2.60px;height:1.90px;background:#6e1b20;"></div><div style="left:54.10px;top:447.48px;width:2.40px;height:1.90px;background:#6e1b20;"></div><div style="left:57.30px;top:447.48px;width:1.80px;height:1.90px;background:#6e1b20;"></div><div class="t" style="left:63.90px;top:442.19px;height:16px;line-height:16px;font-size:9.80px;color:#e6edf3;letter-spacing:0.163px;">.npmignore</div><svg style="left:50.50px;top:461.80px;" width="8" height="9" viewBox="0 0 8 9"><path d="M0.4 1 H7 M0.4 3.4 H5 M0.4 5.8 H7 M0.4 8.2 H4" stroke="#b9c0c8" stroke-width="1.3"/></svg><div class="t" style="left:63.90px;top:459.00px;height:16px;line-height:16px;font-size:9.80px;color:#e6edf3;letter-spacing:-0.080px;">.nvmrc</div><div class="t" style="left:49.10px;top:477.21px;color:#e8d44d;font:bold 9px 'Liberation Sans',sans-serif;letter-spacing:0.6px;height:12px;line-height:12px">{}</div><div class="t" style="left:63.90px;top:475.81px;height:16px;line-height:16px;font-size:9.80px;color:#e6edf3;letter-spacing:-0.040px;">.yo-rc.json</div><svg style="left:50.90px;top:493.92px;" width="8" height="12" viewBox="0 0 8 12"><path d="M0.8 3.4 H7.2 L6.4 11.5 H1.6 Z" fill="#e5383b"/><path d="M3 0.4 L4.4 3.4" stroke="#e5383b" stroke-width="1"/></svg><div class="t" style="left:63.90px;top:492.63px;height:16px;line-height:16px;font-size:9.80px;color:#e6edf3;letter-spacing:0.114px;">gulpfile.js</div><div style="left:58.90px;top:256.24px;width:1.00px;height:84.06px;background:#2a2f37;"></div><div style="left:29.00px;top:50.00px;width:194.00px;height:59.50px;background:#010409;box-shadow:0 1px 2px rgba(0,0,0,.8)"></div><div style="left:29px;top:110px;width:194px;height:12.5px;overflow:hidden;background:#010409"><div style="position:absolute;left:-29px;top:-110px;width:300px;height:300px"><svg style="left:45.50px;top:109.40px;" width="8" height="8" viewBox="0 0 8 8"><path d="M2.4 0.8 L5.6 4 L2.4 7.2" fill="none" stroke="#c9d1d9" stroke-width="1"/></svg><div class="t" style="left:57.70px;top:105.60px;height:16px;line-height:16px;font-size:10.00px;color:#e6edf3;letter-spacing:0.049px;">react-cherry-picked-content</div></div></div><div style="left:29.00px;top:109.30px;width:194.00px;height:1.00px;background:#161b22;"></div><div class="t" style="left:44.00px;top:55.60px;height:16px;line-height:16px;font-size:8.60px;color:#e6edf3;letter-spacing:-0.220px;transform:scaleX(0.8455);transform-origin:0 50%;">EXPLORER</div><div style="left:202.50px;top:62.90px;width:1.80px;height:1.70px;background:#b1bac4;border-radius:0.6px"></div><div style="left:205.80px;top:62.90px;width:1.80px;height:1.70px;background:#b1bac4;border-radius:0.6px"></div><div style="left:209.10px;top:62.90px;width:1.80px;height:1.70px;background:#b1bac4;border-radius:0.6px"></div><svg style="left:32.80px;top:81.20px;" width="8" height="8" viewBox="0 0 8 8"><path d="M0.8 2.4 L4 5.6 L7.2 2.4" fill="none" stroke="#c9d1d9" stroke-width="1"/></svg><div class="t" style="left:44.00px;top:77.60px;height:16px;line-height:16px;font-size:8.40px;color:#e6edf3;letter-spacing:-0.185px;font-weight:bold;">SP-DEV-FX-WEBPARTS [GITHUB]</div><svg style="left:39.30px;top:97.60px;" width="8" height="8" viewBox="0 0 8 8"><path d="M0.8 2.4 L4 5.6 L7.2 2.4" fill="none" stroke="#c9d1d9" stroke-width="1"/></svg><div class="t" style="left:51.80px;top:94.60px;height:16px;line-height:16px;font-size:10.00px;color:#e6edf3;letter-spacing:-0.220px;transform:scaleX(0.9800);transform-origin:0 50%;">samples</div><div style="left:29.00px;top:502.50px;width:194.00px;height:33.50px;background:#010409;"></div><div style="left:29.00px;top:502.50px;width:194.00px;height:1.00px;background:#1f242c;"></div><div style="left:29.00px;top:519.30px;width:194.00px;height:1.00px;background:#1f242c;"></div><svg style="left:32.60px;top:507.40px;" width="8" height="8" viewBox="0 0 8 8"><path d="M2.4 0.8 L5.6 4 L2.4 7.2" fill="none" stroke="#c9d1d9" stroke-width="1"/></svg><svg style="left:32.60px;top:524.00px;" width="8" height="8" viewBox="0 0 8 8"><path d="M2.4 0.8 L5.6 4 L2.4 7.2" fill="none" stroke="#c9d1d9" stroke-width="1"/></svg><div class="t" style="left:44.00px;top:503.40px;height:16px;line-height:16px;font-size:8.40px;color:#e6edf3;letter-spacing:-0.220px;font-weight:bold;transform:scaleX(0.9959);transform-origin:0 50%;">OUTLINE</div><div class="t" style="left:44.00px;top:520.00px;height:16px;line-height:16px;font-size:8.40px;color:#e6edf3;letter-spacing:-0.200px;font-weight:bold;">TIMELINE</div><div style="left:0.00px;top:536.00px;width:1024.00px;height:17.00px;background:#0d1117;"></div><div style="left:0.00px;top:536.00px;width:1024.00px;height:1.00px;background:#1f242c;"></div><div style="left:0.00px;top:536.00px;width:50.00px;height:17.00px;background:#2d333b;"></div><svg style="left:1.20px;top:540.00px;" width="9" height="9" viewBox="0 0 9 9"><path d="M0.8 2.6 L3.6 5.6 L0.8 8.4 M8.2 0.6 L5.4 3.4 L8.2 6.4" fill="none" stroke="#e6edf3" stroke-width="1.2"/></svg><div class="t" style="left:14.60px;top:536.70px;height:16px;line-height:16px;font-size:9.90px;color:#e6edf3;letter-spacing:-0.220px;transform:scaleX(0.9558);transform-origin:0 50%;">GitHub</div><svg style="left:56.00px;top:539.00px;" width="11" height="12" viewBox="0 0 11 12"><circle cx="2.6" cy="2.4" r="1.6" fill="none" stroke="#8b949e" stroke-width="1"/><circle cx="2.6" cy="9.6" r="1.6" fill="none" stroke="#8b949e" stroke-width="1"/><circle cx="8.4" cy="4" r="1.6" fill="none" stroke="#8b949e" stroke-width="1"/><path d="M2.6 4 V8 M8.4 5.6 Q8.4 7.2 6.4 7.2 H2.6" fill="none" stroke="#8b949e" stroke-width="1"/></svg><div class="t" style="left:70.30px;top:536.70px;height:16px;line-height:16px;font-size:9.90px;color:#8b949e;letter-spacing:-0.220px;transform:scaleX(0.9376);transform-origin:0 50%;">main</div><svg style="left:95.60px;top:539.20px;" width="11" height="11" viewBox="0 0 11 11"><path d="M9.4 5.5 A3.9 3.9 0 0 0 3 2.6 M1.6 5.5 A3.9 3.9 0 0 0 8 8.4" fill="none" stroke="#8b949e" stroke-width="1.1"/><path d="M2.6 0.6 V3 H5 M8.4 10.4 V8 H6" fill="none" stroke="#8b949e" stroke-width="1"/></svg><svg style="left:119.40px;top:538.80px;" width="12" height="12" viewBox="0 0 12 12"><circle cx="6" cy="6" r="5.2" fill="none" stroke="#8b949e" stroke-width="1"/><path d="M3.8 3.8 L8.2 8.2 M8.2 3.8 L3.8 8.2" stroke="#8b949e" stroke-width="1"/></svg><div class="t" style="left:134.40px;top:536.70px;height:16px;line-height:16px;font-size:9.90px;color:#8b949e;letter-spacing:0.000px;">0</div><svg style="left:142.00px;top:539.00px;" width="12" height="11" viewBox="0 0 12 11"><path d="M6 0.9 L11.3 10.2 H0.7 Z" fill="none" stroke="#8b949e" stroke-width="1" stroke-linejoin="round"/><path d="M6 4 V7.2 M6 8.2 V9.2" stroke="#8b949e" stroke-width="1"/></svg><div class="t" style="left:156.30px;top:536.70px;height:16px;line-height:16px;font-size:9.90px;color:#8b949e;letter-spacing:0.000px;">0</div><div class="t" style="left:701.40px;top:536.70px;height:16px;line-height:16px;font-size:9.90px;color:#8b949e;letter-spacing:-0.220px;transform:scaleX(0.9279);transform-origin:0 50%;">Ln 223, Col 40</div><div class="t" style="left:770.90px;top:536.70px;height:16px;line-height:16px;font-size:9.90px;color:#8b949e;letter-spacing:-0.220px;transform:scaleX(0.8777);transform-origin:0 50%;">Spaces: 4</div><div class="t" style="left:820.50px;top:536.70px;height:16px;line-height:16px;font-size:9.90px;color:#8b949e;letter-spacing:-0.220px;transform:scaleX(0.8761);transform-origin:0 50%;">UTF-8</div><div class="t" style="left:857.00px;top:536.70px;height:16px;line-height:16px;font-size:9.90px;color:#8b949e;letter-spacing:-0.220px;transform:scaleX(0.7500);transform-origin:0 50%;">LF</div><div class="t" style="left:879.20px;top:536.30px;height:16px;line-height:16px;font-size:9.60px;color:#8b949e;letter-spacing:0.360px;">{ }</div><div class="t" style="left:894.80px;top:536.70px;height:16px;line-height:16px;font-size:9.90px;color:#8b949e;letter-spacing:-0.220px;transform:scaleX(0.9243);transform-origin:0 50%;">TypeScript</div><div class="t" style="left:948.60px;top:536.70px;height:16px;line-height:16px;font-size:9.90px;color:#8b949e;letter-spacing:-0.220px;transform:scaleX(0.8958);transform-origin:0 50%;">Layout: US</div><svg style="left:1004.50px;top:538.60px;" width="12" height="12" viewBox="0 0 12 12"><path d="M2 8.6 Q3.2 7.6 3.2 5 Q3.2 1.6 6 1.6 Q8.8 1.6 8.8 5 Q8.8 7.6 10 8.6 Z" fill="none" stroke="#c9d1d9" stroke-width="1"/><path d="M4.8 10 Q6 11.2 7.2 10" fill="none" stroke="#c9d1d9" stroke-width="1"/><circle cx="9.2" cy="2.6" r="2" fill="#c9d1d9"/></svg>
</div></div>
</body></html>
